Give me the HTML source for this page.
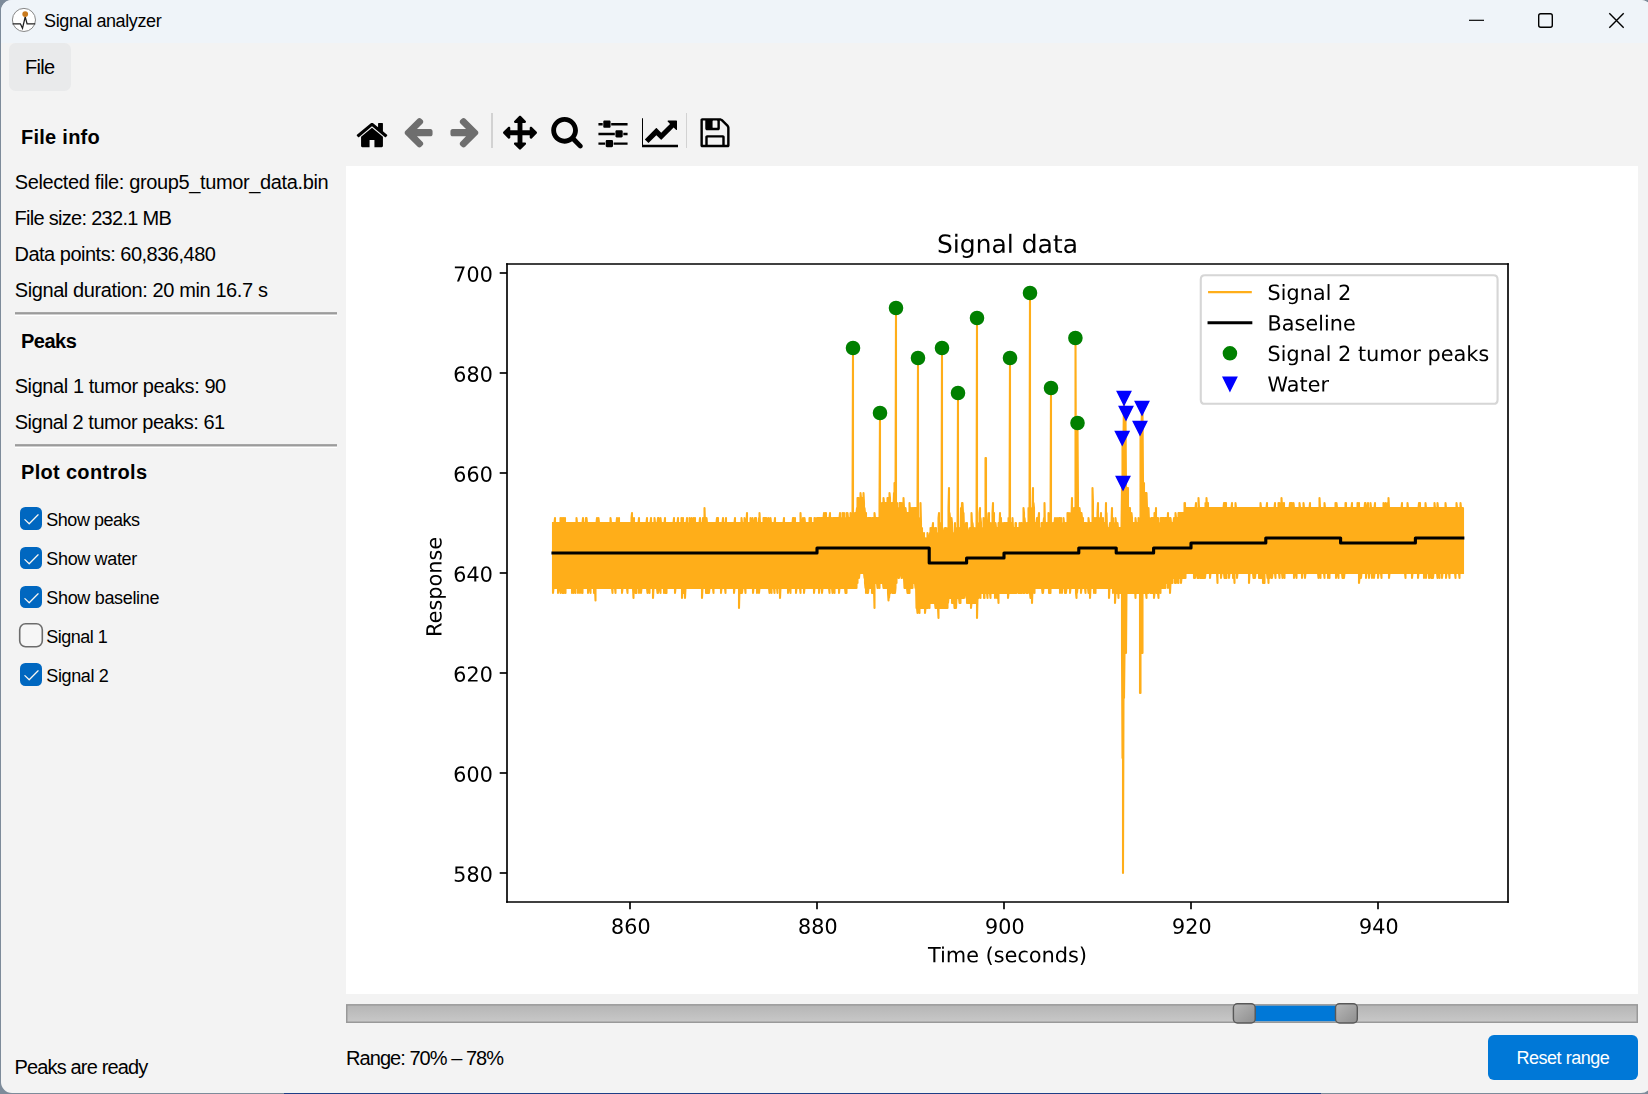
<!DOCTYPE html>
<html><head><meta charset="utf-8"><title>Signal analyzer</title>
<style>
html,body{margin:0;padding:0}
body{width:1648px;height:1094px;overflow:hidden;background:linear-gradient(90deg,#7d8b9a 0,#7d8b9a 284px,#1d3e86 284px,#1d3e86 1321px,#7d8b9a 1321px);position:relative;font-family:"Liberation Sans",sans-serif;color:#000}
#win{position:absolute;left:1px;top:0;width:1650.5px;height:1092.7px;background:#f3f3f3;border-radius:11px;overflow:hidden}
#tb{position:absolute;left:0;top:0;width:100%;height:43px;background:#eff4f9}
.abs,.t,.ic{position:absolute}
.t{white-space:nowrap;line-height:1}
#win>*{margin-left:-1px}
#tb{margin-left:0}
.sep{position:absolute;left:15px;width:322px;height:4px;background:linear-gradient(#a6a6a6 0,#a6a6a6 1px,#9b9b9b 1px,#9b9b9b 2px,#cfcfcf 2px,#cfcfcf 3px,#fff 3px,#fff 4px)}
.cb{position:absolute;left:19.9px;width:22.3px;height:22.6px;border-radius:5.3px;background:#0067c0}
.cb svg{position:absolute;left:0;top:0}
.cbu{position:absolute;left:18.9px;width:24.2px;height:24.4px;box-sizing:border-box;border-radius:6.5px;background:#f6f6f6;border:1.5px solid #747474}
</style></head><body><div id="win">
<div id="tb"></div>

<svg class="abs" style="left:10px;top:6px" width="28" height="28" viewBox="10 6 28 28"><circle cx="23.95" cy="19.95" r="11.55" fill="#fff" stroke="#868686" stroke-width="1"/><path d="M12.6 23.8H20.4L22.5 28.3L25.2 16.8L27.1 23.8H35.2" fill="none" stroke="#222" stroke-width="1.3" stroke-linejoin="miter"/><circle cx="25.2" cy="14.1" r="2.9" fill="#c97a1e"/></svg>
<svg class="abs" style="left:1460px;top:8px" width="180" height="26" viewBox="1460 8 180 26" fill="none" stroke="#000" stroke-width="1.4"><path d="M1469 20.3H1484" stroke-width="1.15"/><rect x="1538.7" y="13.7" width="13.6" height="13.6" rx="2"/><path d="M1609.3 13.3L1623.7 27.7M1623.7 13.3L1609.3 27.7"/></svg>
<div class="abs" style="left:8.8px;top:43px;width:62.5px;height:48px;border-radius:6.5px;background:#e9eaeb"></div>
<div class="abs" style="left:1488px;top:1034.8px;width:150px;height:45.2px;border-radius:6px;background:#0078d7"></div>
<div class="t" style="left:44.10px;top:11.66px;font-size:18px;letter-spacing:-0.393px;">Signal analyzer</div>
<div class="t" style="left:24.90px;top:56.87px;font-size:20px;letter-spacing:-0.667px;">File</div>
<div class="t" style="left:21.00px;top:127.17px;font-size:20px;font-weight:bold;letter-spacing:0.263px;">File info</div>
<div class="t" style="left:14.70px;top:172.07px;font-size:20px;letter-spacing:-0.371px;">Selected file: group5_tumor_data.bin</div>
<div class="t" style="left:14.50px;top:208.07px;font-size:20px;letter-spacing:-0.711px;">File size: 232.1 MB</div>
<div class="t" style="left:14.50px;top:244.07px;font-size:20px;letter-spacing:-0.500px;">Data points: 60,836,480</div>
<div class="t" style="left:14.70px;top:279.87px;font-size:20px;letter-spacing:-0.393px;">Signal duration: 20 min 16.7 s</div>
<div class="t" style="left:21.00px;top:330.67px;font-size:20px;font-weight:bold;letter-spacing:-0.500px;">Peaks</div>
<div class="t" style="left:14.70px;top:375.97px;font-size:20px;letter-spacing:-0.422px;">Signal 1 tumor peaks: 90</div>
<div class="t" style="left:14.70px;top:411.87px;font-size:20px;letter-spacing:-0.465px;">Signal 2 tumor peaks: 61</div>
<div class="t" style="left:21.00px;top:462.37px;font-size:20px;font-weight:bold;letter-spacing:0.317px;">Plot controls</div>
<div class="t" style="left:46.30px;top:510.96px;font-size:18px;letter-spacing:-0.478px;">Show peaks</div>
<div class="t" style="left:46.30px;top:549.86px;font-size:18px;letter-spacing:-0.344px;">Show water</div>
<div class="t" style="left:46.30px;top:588.96px;font-size:18px;letter-spacing:-0.325px;">Show baseline</div>
<div class="t" style="left:46.30px;top:627.96px;font-size:18px;letter-spacing:-0.514px;">Signal 1</div>
<div class="t" style="left:46.30px;top:666.86px;font-size:18px;letter-spacing:-0.386px;">Signal 2</div>
<div class="t" style="left:14.60px;top:1057.07px;font-size:20px;letter-spacing:-0.857px;">Peaks are ready</div>
<div class="t" style="left:346.10px;top:1048.07px;font-size:20px;letter-spacing:-0.960px;">Range: 70% – 78%</div>
<div class="t" style="left:1516.40px;top:1048.76px;font-size:18px;color:#fff;letter-spacing:-0.460px;">Reset range</div>
<div class="sep" style="top:312px"></div><div class="sep" style="top:444px"></div>
<div class="cb" style="top:507.4px"><svg width="22.3" height="22.3" viewBox="0 0 22.3 22.3"><path d="M4.9 12.6L9.2 16.8L18.1 7.8" fill="none" stroke="#fbf8f2" stroke-width="1.25" stroke-linecap="round" stroke-linejoin="round"/></svg></div>
<div class="cb" style="top:546.5px"><svg width="22.3" height="22.3" viewBox="0 0 22.3 22.3"><path d="M4.9 12.6L9.2 16.8L18.1 7.8" fill="none" stroke="#fbf8f2" stroke-width="1.25" stroke-linecap="round" stroke-linejoin="round"/></svg></div>
<div class="cb" style="top:585.5px"><svg width="22.3" height="22.3" viewBox="0 0 22.3 22.3"><path d="M4.9 12.6L9.2 16.8L18.1 7.8" fill="none" stroke="#fbf8f2" stroke-width="1.25" stroke-linecap="round" stroke-linejoin="round"/></svg></div>
<svg class="abs" style="left:17px;top:621px" width="28" height="28" viewBox="0 0 28 28"><rect x="2.7" y="2.8" width="22.6" height="22.9" rx="5.9" fill="#f6f6f6" stroke="#6c6c6c" stroke-width="1.6"/></svg>
<div class="cb" style="top:663.2px"><svg width="22.3" height="22.3" viewBox="0 0 22.3 22.3"><path d="M4.9 12.6L9.2 16.8L18.1 7.8" fill="none" stroke="#fbf8f2" stroke-width="1.25" stroke-linecap="round" stroke-linejoin="round"/></svg></div>
<svg class="ic" style="left:353.8px;top:114.3px" width="36" height="36" viewBox="0 0 72 72"><path d="M 57.86 45.94 C 57.86 45.87 57.86 45.79 57.82 45.72 L 35.99 27.73 L 14.18 45.72 C 14.18 45.79 14.14 45.87 14.14 45.94 L 14.14 64.15 C 14.14 65.48 15.24 66.58 16.57 66.58 L 31.14 66.58 L 31.14 52.02 L 40.86 52.02 L 40.86 66.58 L 55.43 66.58 C 56.76 66.58 57.86 65.48 57.86 64.15 z M 66.32 43.33 C 66.73 42.83 66.66 42.03 66.17 41.62 L 57.86 34.71 L 57.86 19.23 C 57.86 18.55 57.33 18.02 56.64 18.02 L 49.36 18.02 C 48.67 18.02 48.14 18.55 48.14 19.23 L 48.14 26.62 L 38.88 18.89 C 37.29 17.56 34.71 17.56 33.12 18.89 L 5.83 41.62 C 5.34 42.03 5.27 42.83 5.68 43.33 L 8.03 46.13 C 8.22 46.35 8.53 46.51 8.83 46.55 C 9.17 46.59 9.47 46.47 9.74 46.28 L 35.99 24.39 L 62.26 46.28 C 62.48 46.47 62.75 46.55 63.06 46.55 C 63.09 46.55 63.13 46.55 63.17 46.55 C 63.47 46.51 63.78 46.35 63.97 46.13 z" fill="#000"/></svg>
<svg class="ic" style="left:399.6px;top:114.3px" width="36" height="36" viewBox="0 0 72 72"><path d="M 65.14 35.01 C 65.14 32.42 63.43 30.15 60.7 30.15 L 33.99 30.15 L 45.11 19.04 C 46.02 18.12 46.55 16.87 46.55 15.58 C 46.55 14.29 46.02 13.03 45.11 12.13 L 42.26 9.32 C 41.34 8.41 40.13 7.88 38.85 7.88 C 37.55 7.88 36.3 8.41 35.39 9.32 L 10.69 33.99 C 9.82 34.9 9.29 36.14 9.29 37.44 C 9.29 38.73 9.82 39.98 10.69 40.85 L 35.39 65.6 C 36.3 66.47 37.55 67 38.85 67 C 40.13 67 41.39 66.47 42.26 65.6 L 45.11 62.71 C 46.02 61.84 46.55 60.58 46.55 59.3 C 46.55 58.01 46.02 56.76 45.11 55.88 L 33.99 44.73 L 60.7 44.73 C 63.43 44.73 65.14 42.44 65.14 39.86 z" fill="#6e6e6e"/></svg>
<svg class="ic" style="left:446.7px;top:114.3px" width="36" height="36" viewBox="0 0 72 72"><path d="M 62.71 37.44 C 62.71 36.14 62.22 34.9 61.31 34.02 L 36.61 9.32 C 35.69 8.41 34.44 7.88 33.15 7.88 C 31.87 7.88 30.64 8.41 29.74 9.32 L 26.89 12.16 C 25.98 13.03 25.45 14.29 25.45 15.58 C 25.45 16.87 25.98 18.12 26.89 19 L 38.01 30.15 L 11.3 30.15 C 8.57 30.15 6.86 32.42 6.86 35.01 L 6.86 39.86 C 6.86 42.44 8.57 44.73 11.3 44.73 L 38.01 44.73 L 26.89 55.84 C 25.98 56.76 25.45 58.01 25.45 59.3 C 25.45 60.58 25.98 61.84 26.89 62.75 L 29.74 65.6 C 30.64 66.47 31.87 67 33.15 67 C 34.44 67 35.69 66.47 36.61 65.6 L 61.31 40.89 C 62.22 39.98 62.71 38.73 62.71 37.44" fill="#6e6e6e"/></svg>
<div class="abs" style="left:491.3px;top:113px;width:1.4px;height:35px;background:#d2d2d2"></div>
<svg class="ic" style="left:502.1px;top:114.3px" width="36" height="36" viewBox="0 0 72 72"><path d="M 70 37.44 C 70 36.8 69.73 36.19 69.28 35.74 L 59.57 26.02 C 59.11 25.56 58.5 25.3 57.86 25.3 C 56.53 25.3 55.43 26.4 55.43 27.73 L 55.43 32.58 L 40.86 32.58 L 40.86 18.02 L 45.71 18.02 C 47.04 18.02 48.14 16.91 48.14 15.58 C 48.14 14.94 47.88 14.33 47.42 13.87 L 37.71 4.16 C 37.25 3.71 36.65 3.44 36 3.44 C 35.35 3.44 34.75 3.71 34.29 4.16 L 24.58 13.87 C 24.12 14.33 23.86 14.94 23.86 15.58 C 23.86 16.91 24.96 18.02 26.29 18.02 L 31.14 18.02 L 31.14 32.58 L 16.57 32.58 L 16.57 27.73 C 16.57 26.4 15.47 25.3 14.14 25.3 C 13.5 25.3 12.89 25.56 12.43 26.02 L 2.72 35.74 C 2.27 36.19 2 36.8 2 37.44 C 2 38.09 2.27 38.69 2.72 39.15 L 12.43 48.86 C 12.89 49.32 13.5 49.58 14.14 49.58 C 15.47 49.58 16.57 48.49 16.57 47.16 L 16.57 42.3 L 31.14 42.3 L 31.14 56.87 L 26.29 56.87 C 24.96 56.87 23.86 57.97 23.86 59.3 C 23.86 59.94 24.12 60.55 24.58 61.01 L 34.29 70.72 C 34.75 71.17 35.35 71.44 36 71.44 C 36.65 71.44 37.25 71.17 37.71 70.72 L 47.42 61.01 C 47.88 60.55 48.14 59.94 48.14 59.3 C 48.14 57.97 47.04 56.87 45.71 56.87 L 40.86 56.87 L 40.86 42.3 L 55.43 42.3 L 55.43 47.16 C 55.43 48.49 56.53 49.58 57.86 49.58 C 58.5 49.58 59.11 49.32 59.57 48.86 L 69.28 39.15 C 69.73 38.69 70 38.09 70 37.44" fill="#000"/></svg>
<svg class="ic" style="left:549.3px;top:114.3px" width="36" height="36" viewBox="0 0 72 72"><path d="M 48.14 32.59 C 48.14 41.96 40.51 49.59 31.14 49.59 C 21.77 49.59 14.14 41.96 14.14 32.59 C 14.14 23.22 21.77 15.59 31.14 15.59 C 40.51 15.59 48.14 23.22 48.14 32.59 M 67.57 64.16 C 67.57 62.87 67.04 61.62 66.17 60.75 L 53.15 47.73 C 56.22 43.29 57.86 37.98 57.86 32.59 C 57.86 17.82 45.91 5.87 31.14 5.87 C 16.38 5.87 4.43 17.82 4.43 32.59 C 4.43 47.35 16.38 59.3 31.14 59.3 C 36.53 59.3 41.84 57.66 46.28 54.59 L 59.3 67.58 C 60.17 68.48 61.42 69.01 62.72 69.01 C 65.37 69.01 67.57 66.81 67.57 64.16" fill="#000"/></svg>
<svg class="ic" style="left:594.5px;top:114.3px" width="36" height="36" viewBox="0 0 72 72"><path d="M 20.21 56.87 L 6.86 56.87 L 6.86 61.73 L 20.21 61.73 z M 33.57 52.02 L 23.86 52.02 C 22.53 52.02 21.42 53.11 21.42 54.44 L 21.42 64.16 C 21.42 65.49 22.53 66.58 23.86 66.58 L 33.57 66.58 C 34.9 66.58 36 65.49 36 64.16 L 36 54.44 C 36 53.11 34.9 52.02 33.57 52.02 M 39.64 37.44 L 6.86 37.44 L 6.86 42.3 L 39.64 42.3 z M 15.36 18.02 L 6.86 18.02 L 6.86 22.87 L 15.36 22.87 z M 65.14 56.87 L 37.21 56.87 L 37.21 61.73 L 65.14 61.73 z M 28.71 13.16 L 19 13.16 C 17.67 13.16 16.57 14.26 16.57 15.58 L 16.57 25.3 C 16.57 26.62 17.67 27.73 19 27.73 L 28.71 27.73 C 30.04 27.73 31.14 26.62 31.14 25.3 L 31.14 15.58 C 31.14 14.26 30.04 13.16 28.71 13.16 M 53 32.58 L 43.29 32.58 C 41.96 32.58 40.86 33.69 40.86 35.02 L 40.86 44.73 C 40.86 46.06 41.96 47.16 43.29 47.16 L 53 47.16 C 54.33 47.16 55.42 46.06 55.42 44.73 L 55.42 35.02 C 55.42 33.69 54.33 32.58 53 32.58 M 65.14 37.44 L 56.64 37.44 L 56.64 42.3 L 65.14 42.3 z M 65.14 18.02 L 32.36 18.02 L 32.36 22.87 L 65.14 22.87 z" fill="#000"/></svg>
<svg class="ic" style="left:642.3px;top:114.3px" width="36" height="36" viewBox="0 0 72 72"><path d="M 74.86 61.73 L 2 61.73 L 2 8.3 L -2.86 8.3 L -2.86 66.58 L 74.86 66.58 z M 70 14.37 C 70 13.69 69.47 13.16 68.79 13.16 L 52.28 13.16 C 51.22 13.16 50.65 14.45 51.45 15.24 L 56.04 19.83 L 38.43 37.44 L 29.59 28.6 C 29.09 28.11 28.34 28.11 27.84 28.6 L 5.64 50.8 L 12.93 58.08 L 28.71 42.3 L 37.56 51.15 C 38.05 51.63 38.8 51.63 39.3 51.15 L 63.33 27.12 L 67.92 31.71 C 68.71 32.51 70 31.94 70 30.87 z" fill="#000"/></svg>
<div class="abs" style="left:685.5px;top:113px;width:1.4px;height:35px;background:#d2d2d2"></div>
<svg class="ic" style="left:697px;top:114.3px" width="36" height="36" viewBox="0 0 72 72"><path d="M 21.42 61.73 L 21.42 47.16 L 50.57 47.16 L 50.57 61.73 z M 55.42 61.73 L 55.42 45.94 C 55.42 43.93 53.8 42.3 51.79 42.3 L 20.21 42.3 C 18.2 42.3 16.57 43.93 16.57 45.94 L 16.57 61.73 L 11.71 61.73 L 11.71 13.16 L 16.57 13.16 L 16.57 28.94 C 16.57 30.96 18.2 32.58 20.21 32.58 L 42.07 32.58 C 44.09 32.58 45.71 30.96 45.71 28.94 L 45.71 13.16 C 46.48 13.16 47.95 13.77 48.48 14.3 L 59.14 24.96 C 59.64 25.45 60.29 27.01 60.29 27.73 L 60.29 61.73 z M 40.86 26.52 C 40.86 27.16 40.28 27.73 39.64 27.73 L 32.36 27.73 C 31.71 27.73 31.14 27.16 31.14 26.52 L 31.14 14.37 C 31.14 13.72 31.71 13.16 32.36 13.16 L 39.64 13.16 C 40.28 13.16 40.86 13.72 40.86 14.37 z M 65.14 27.73 C 65.14 25.72 64.01 22.95 62.56 21.5 L 51.94 10.88 C 50.49 9.44 47.72 8.3 45.71 8.3 L 10.5 8.3 C 8.49 8.3 6.86 9.93 6.86 11.94 L 6.86 62.94 C 6.86 64.96 8.49 66.58 10.5 66.58 L 61.5 66.58 C 63.51 66.58 65.14 64.96 65.14 62.94 z" fill="#000"/></svg>
<div class="abs" style="left:346px;top:166px;width:1292px;height:828px;background:#fff"><svg id="plot" width="1292" height="828" viewBox="0 0 620.16 397.44">
<defs>
<style>#plot *{stroke-linejoin:round;stroke-linecap:butt}</style>
</defs>
<g id="figure_1">
<g id="patch_1">
<path d="M 0 397.44 L 620.16 397.44 L 620.16 0 L 0 0 z" style="fill: #ffffff"/>
</g>
<g id="axes_1">
<g id="patch_2">
<path d="M 77.28 353.28 L 557.76 353.28 L 557.76 47.04 L 77.28 47.04 z" style="fill: #ffffff"/>
</g>
<g id="matplotlib.axis_1">
<g id="xtick_1">
<g id="line2d_1">
<defs>
<path id="m1504cfccaf" d="M 0 0 L 0 3.5" style="stroke: #000000; stroke-width: 0.8"/>
</defs>
<g>
<use href="#m1504cfccaf" x="136.32" y="353.28" style="stroke: #000000; stroke-width: 0.8"/>
</g>
</g>
<g id="text_1" transform="translate(0.384 0.624)">
<g transform="translate(126.77625 367.878437) scale(0.1 -0.1)">
<defs>
<path id="DejaVuSans-38" d="M 2034 2216 Q 1584 2216 1326 1975 Q 1069 1734 1069 1313 Q 1069 891 1326 650 Q 1584 409 2034 409 Q 2484 409 2743 651 Q 3003 894 3003 1313 Q 3003 1734 2745 1975 Q 2488 2216 2034 2216 z M 1403 2484 Q 997 2584 770 2862 Q 544 3141 544 3541 Q 544 4100 942 4425 Q 1341 4750 2034 4750 Q 2731 4750 3128 4425 Q 3525 4100 3525 3541 Q 3525 3141 3298 2862 Q 3072 2584 2669 2484 Q 3125 2378 3379 2068 Q 3634 1759 3634 1313 Q 3634 634 3220 271 Q 2806 -91 2034 -91 Q 1263 -91 848 271 Q 434 634 434 1313 Q 434 1759 690 2068 Q 947 2378 1403 2484 z M 1172 3481 Q 1172 3119 1398 2916 Q 1625 2713 2034 2713 Q 2441 2713 2670 2916 Q 2900 3119 2900 3481 Q 2900 3844 2670 4047 Q 2441 4250 2034 4250 Q 1625 4250 1398 4047 Q 1172 3844 1172 3481 z" transform="scale(0.015625)"/>
<path id="DejaVuSans-36" d="M 2113 2584 Q 1688 2584 1439 2293 Q 1191 2003 1191 1497 Q 1191 994 1439 701 Q 1688 409 2113 409 Q 2538 409 2786 701 Q 3034 994 3034 1497 Q 3034 2003 2786 2293 Q 2538 2584 2113 2584 z M 3366 4563 L 3366 3988 Q 3128 4100 2886 4159 Q 2644 4219 2406 4219 Q 1781 4219 1451 3797 Q 1122 3375 1075 2522 Q 1259 2794 1537 2939 Q 1816 3084 2150 3084 Q 2853 3084 3261 2657 Q 3669 2231 3669 1497 Q 3669 778 3244 343 Q 2819 -91 2113 -91 Q 1303 -91 875 529 Q 447 1150 447 2328 Q 447 3434 972 4092 Q 1497 4750 2381 4750 Q 2619 4750 2861 4703 Q 3103 4656 3366 4563 z" transform="scale(0.015625)"/>
<path id="DejaVuSans-30" d="M 2034 4250 Q 1547 4250 1301 3770 Q 1056 3291 1056 2328 Q 1056 1369 1301 889 Q 1547 409 2034 409 Q 2525 409 2770 889 Q 3016 1369 3016 2328 Q 3016 3291 2770 3770 Q 2525 4250 2034 4250 z M 2034 4750 Q 2819 4750 3233 4129 Q 3647 3509 3647 2328 Q 3647 1150 3233 529 Q 2819 -91 2034 -91 Q 1250 -91 836 529 Q 422 1150 422 2328 Q 422 3509 836 4129 Q 1250 4750 2034 4750 z" transform="scale(0.015625)"/>
</defs>
<use href="#DejaVuSans-38"/>
<use href="#DejaVuSans-36" transform="translate(63.623047 0)"/>
<use href="#DejaVuSans-30" transform="translate(127.246094 0)"/>
</g>
</g>
</g>
<g id="xtick_2">
<g id="line2d_2">
<g>
<use href="#m1504cfccaf" x="226.08" y="353.28" style="stroke: #000000; stroke-width: 0.8"/>
</g>
</g>
<g id="text_2" transform="translate(0.384 0.624)">
<g transform="translate(216.53625 367.878437) scale(0.1 -0.1)">
<use href="#DejaVuSans-38"/>
<use href="#DejaVuSans-38" transform="translate(63.623047 0)"/>
<use href="#DejaVuSans-30" transform="translate(127.246094 0)"/>
</g>
</g>
</g>
<g id="xtick_3">
<g id="line2d_3">
<g>
<use href="#m1504cfccaf" x="315.84" y="353.28" style="stroke: #000000; stroke-width: 0.8"/>
</g>
</g>
<g id="text_3" transform="translate(0.384 0.624)">
<g transform="translate(306.29625 367.878437) scale(0.1 -0.1)">
<defs>
<path id="DejaVuSans-39" d="M 703 97 L 703 672 Q 941 559 1184 500 Q 1428 441 1663 441 Q 2288 441 2617 861 Q 2947 1281 2994 2138 Q 2813 1869 2534 1725 Q 2256 1581 1919 1581 Q 1219 1581 811 2004 Q 403 2428 403 3163 Q 403 3881 828 4315 Q 1253 4750 1959 4750 Q 2769 4750 3195 4129 Q 3622 3509 3622 2328 Q 3622 1225 3098 567 Q 2575 -91 1691 -91 Q 1453 -91 1209 -44 Q 966 3 703 97 z M 1959 2075 Q 2384 2075 2632 2365 Q 2881 2656 2881 3163 Q 2881 3666 2632 3958 Q 2384 4250 1959 4250 Q 1534 4250 1286 3958 Q 1038 3666 1038 3163 Q 1038 2656 1286 2365 Q 1534 2075 1959 2075 z" transform="scale(0.015625)"/>
</defs>
<use href="#DejaVuSans-39"/>
<use href="#DejaVuSans-30" transform="translate(63.623047 0)"/>
<use href="#DejaVuSans-30" transform="translate(127.246094 0)"/>
</g>
</g>
</g>
<g id="xtick_4">
<g id="line2d_4">
<g>
<use href="#m1504cfccaf" x="405.6" y="353.28" style="stroke: #000000; stroke-width: 0.8"/>
</g>
</g>
<g id="text_4" transform="translate(0.384 0.624)">
<g transform="translate(396.05625 367.878437) scale(0.1 -0.1)">
<defs>
<path id="DejaVuSans-32" d="M 1228 531 L 3431 531 L 3431 0 L 469 0 L 469 531 Q 828 903 1448 1529 Q 2069 2156 2228 2338 Q 2531 2678 2651 2914 Q 2772 3150 2772 3378 Q 2772 3750 2511 3984 Q 2250 4219 1831 4219 Q 1534 4219 1204 4116 Q 875 4013 500 3803 L 500 4441 Q 881 4594 1212 4672 Q 1544 4750 1819 4750 Q 2544 4750 2975 4387 Q 3406 4025 3406 3419 Q 3406 3131 3298 2873 Q 3191 2616 2906 2266 Q 2828 2175 2409 1742 Q 1991 1309 1228 531 z" transform="scale(0.015625)"/>
</defs>
<use href="#DejaVuSans-39"/>
<use href="#DejaVuSans-32" transform="translate(63.623047 0)"/>
<use href="#DejaVuSans-30" transform="translate(127.246094 0)"/>
</g>
</g>
</g>
<g id="xtick_5">
<g id="line2d_5">
<g>
<use href="#m1504cfccaf" x="495.36" y="353.28" style="stroke: #000000; stroke-width: 0.8"/>
</g>
</g>
<g id="text_5" transform="translate(0.384 0.624)">
<g transform="translate(485.81625 367.878437) scale(0.1 -0.1)">
<defs>
<path id="DejaVuSans-34" d="M 2419 4116 L 825 1625 L 2419 1625 L 2419 4116 z M 2253 4666 L 3047 4666 L 3047 1625 L 3713 1625 L 3713 1100 L 3047 1100 L 3047 0 L 2419 0 L 2419 1100 L 313 1100 L 313 1709 L 2253 4666 z" transform="scale(0.015625)"/>
</defs>
<use href="#DejaVuSans-39"/>
<use href="#DejaVuSans-34" transform="translate(63.623047 0)"/>
<use href="#DejaVuSans-30" transform="translate(127.246094 0)"/>
</g>
</g>
</g>
<g id="text_6" transform="translate(0.000 0.624)">
<g transform="translate(279.358281 381.556562) scale(0.1 -0.1)">
<defs>
<path id="DejaVuSans-54" d="M -19 4666 L 3928 4666 L 3928 4134 L 2272 4134 L 2272 0 L 1638 0 L 1638 4134 L -19 4134 L -19 4666 z" transform="scale(0.015625)"/>
<path id="DejaVuSans-69" d="M 603 3500 L 1178 3500 L 1178 0 L 603 0 L 603 3500 z M 603 4863 L 1178 4863 L 1178 4134 L 603 4134 L 603 4863 z" transform="scale(0.015625)"/>
<path id="DejaVuSans-6d" d="M 3328 2828 Q 3544 3216 3844 3400 Q 4144 3584 4550 3584 Q 5097 3584 5394 3201 Q 5691 2819 5691 2113 L 5691 0 L 5113 0 L 5113 2094 Q 5113 2597 4934 2840 Q 4756 3084 4391 3084 Q 3944 3084 3684 2787 Q 3425 2491 3425 1978 L 3425 0 L 2847 0 L 2847 2094 Q 2847 2600 2669 2842 Q 2491 3084 2119 3084 Q 1678 3084 1418 2786 Q 1159 2488 1159 1978 L 1159 0 L 581 0 L 581 3500 L 1159 3500 L 1159 2956 Q 1356 3278 1631 3431 Q 1906 3584 2284 3584 Q 2666 3584 2933 3390 Q 3200 3197 3328 2828 z" transform="scale(0.015625)"/>
<path id="DejaVuSans-65" d="M 3597 1894 L 3597 1613 L 953 1613 Q 991 1019 1311 708 Q 1631 397 2203 397 Q 2534 397 2845 478 Q 3156 559 3463 722 L 3463 178 Q 3153 47 2828 -22 Q 2503 -91 2169 -91 Q 1331 -91 842 396 Q 353 884 353 1716 Q 353 2575 817 3079 Q 1281 3584 2069 3584 Q 2775 3584 3186 3129 Q 3597 2675 3597 1894 z M 3022 2063 Q 3016 2534 2758 2815 Q 2500 3097 2075 3097 Q 1594 3097 1305 2825 Q 1016 2553 972 2059 L 3022 2063 z" transform="scale(0.015625)"/>
<path id="DejaVuSans-20" transform="scale(0.015625)"/>
<path id="DejaVuSans-28" d="M 1984 4856 Q 1566 4138 1362 3434 Q 1159 2731 1159 2009 Q 1159 1288 1364 580 Q 1569 -128 1984 -844 L 1484 -844 Q 1016 -109 783 600 Q 550 1309 550 2009 Q 550 2706 781 3412 Q 1013 4119 1484 4856 L 1984 4856 z" transform="scale(0.015625)"/>
<path id="DejaVuSans-73" d="M 2834 3397 L 2834 2853 Q 2591 2978 2328 3040 Q 2066 3103 1784 3103 Q 1356 3103 1142 2972 Q 928 2841 928 2578 Q 928 2378 1081 2264 Q 1234 2150 1697 2047 L 1894 2003 Q 2506 1872 2764 1633 Q 3022 1394 3022 966 Q 3022 478 2636 193 Q 2250 -91 1575 -91 Q 1294 -91 989 -36 Q 684 19 347 128 L 347 722 Q 666 556 975 473 Q 1284 391 1588 391 Q 1994 391 2212 530 Q 2431 669 2431 922 Q 2431 1156 2273 1281 Q 2116 1406 1581 1522 L 1381 1569 Q 847 1681 609 1914 Q 372 2147 372 2553 Q 372 3047 722 3315 Q 1072 3584 1716 3584 Q 2034 3584 2315 3537 Q 2597 3491 2834 3397 z" transform="scale(0.015625)"/>
<path id="DejaVuSans-63" d="M 3122 3366 L 3122 2828 Q 2878 2963 2633 3030 Q 2388 3097 2138 3097 Q 1578 3097 1268 2742 Q 959 2388 959 1747 Q 959 1106 1268 751 Q 1578 397 2138 397 Q 2388 397 2633 464 Q 2878 531 3122 666 L 3122 134 Q 2881 22 2623 -34 Q 2366 -91 2075 -91 Q 1284 -91 818 406 Q 353 903 353 1747 Q 353 2603 823 3093 Q 1294 3584 2113 3584 Q 2378 3584 2631 3529 Q 2884 3475 3122 3366 z" transform="scale(0.015625)"/>
<path id="DejaVuSans-6f" d="M 1959 3097 Q 1497 3097 1228 2736 Q 959 2375 959 1747 Q 959 1119 1226 758 Q 1494 397 1959 397 Q 2419 397 2687 759 Q 2956 1122 2956 1747 Q 2956 2369 2687 2733 Q 2419 3097 1959 3097 z M 1959 3584 Q 2709 3584 3137 3096 Q 3566 2609 3566 1747 Q 3566 888 3137 398 Q 2709 -91 1959 -91 Q 1206 -91 779 398 Q 353 888 353 1747 Q 353 2609 779 3096 Q 1206 3584 1959 3584 z" transform="scale(0.015625)"/>
<path id="DejaVuSans-6e" d="M 3513 2113 L 3513 0 L 2938 0 L 2938 2094 Q 2938 2591 2744 2837 Q 2550 3084 2163 3084 Q 1697 3084 1428 2787 Q 1159 2491 1159 1978 L 1159 0 L 581 0 L 581 3500 L 1159 3500 L 1159 2956 Q 1366 3272 1645 3428 Q 1925 3584 2291 3584 Q 2894 3584 3203 3211 Q 3513 2838 3513 2113 z" transform="scale(0.015625)"/>
<path id="DejaVuSans-64" d="M 2906 2969 L 2906 4863 L 3481 4863 L 3481 0 L 2906 0 L 2906 525 Q 2725 213 2448 61 Q 2172 -91 1784 -91 Q 1150 -91 751 415 Q 353 922 353 1747 Q 353 2572 751 3078 Q 1150 3584 1784 3584 Q 2172 3584 2448 3432 Q 2725 3281 2906 2969 z M 947 1747 Q 947 1113 1208 752 Q 1469 391 1925 391 Q 2381 391 2643 752 Q 2906 1113 2906 1747 Q 2906 2381 2643 2742 Q 2381 3103 1925 3103 Q 1469 3103 1208 2742 Q 947 2381 947 1747 z" transform="scale(0.015625)"/>
<path id="DejaVuSans-29" d="M 513 4856 L 1013 4856 Q 1481 4119 1714 3412 Q 1947 2706 1947 2009 Q 1947 1309 1714 600 Q 1481 -109 1013 -844 L 513 -844 Q 928 -128 1133 580 Q 1338 1288 1338 2009 Q 1338 2731 1133 3434 Q 928 4138 513 4856 z" transform="scale(0.015625)"/>
</defs>
<use href="#DejaVuSans-54"/>
<use href="#DejaVuSans-69" transform="translate(57.958984 0)"/>
<use href="#DejaVuSans-6d" transform="translate(85.742188 0)"/>
<use href="#DejaVuSans-65" transform="translate(183.154297 0)"/>
<use href="#DejaVuSans-20" transform="translate(244.677734 0)"/>
<use href="#DejaVuSans-28" transform="translate(276.464844 0)"/>
<use href="#DejaVuSans-73" transform="translate(315.478516 0)"/>
<use href="#DejaVuSans-65" transform="translate(367.578125 0)"/>
<use href="#DejaVuSans-63" transform="translate(429.101562 0)"/>
<use href="#DejaVuSans-6f" transform="translate(484.082031 0)"/>
<use href="#DejaVuSans-6e" transform="translate(545.263672 0)"/>
<use href="#DejaVuSans-64" transform="translate(608.642578 0)"/>
<use href="#DejaVuSans-73" transform="translate(672.119141 0)"/>
<use href="#DejaVuSans-29" transform="translate(724.21875 0)"/>
</g>
</g>
</g>
<g id="matplotlib.axis_2">
<g id="ytick_1">
<g id="line2d_6">
<defs>
<path id="m5d545ce8f8" d="M 0 0 L -3.5 0" style="stroke: #000000; stroke-width: 0.8"/>
</defs>
<g>
<use href="#m5d545ce8f8" x="77.28" y="339.36" style="stroke: #000000; stroke-width: 0.8"/>
</g>
</g>
<g id="text_7" transform="translate(0.240 0.336)">
<g transform="translate(51.1925 343.159219) scale(0.1 -0.1)">
<defs>
<path id="DejaVuSans-35" d="M 691 4666 L 3169 4666 L 3169 4134 L 1269 4134 L 1269 2991 Q 1406 3038 1543 3061 Q 1681 3084 1819 3084 Q 2600 3084 3056 2656 Q 3513 2228 3513 1497 Q 3513 744 3044 326 Q 2575 -91 1722 -91 Q 1428 -91 1123 -41 Q 819 9 494 109 L 494 744 Q 775 591 1075 516 Q 1375 441 1709 441 Q 2250 441 2565 725 Q 2881 1009 2881 1497 Q 2881 1984 2565 2268 Q 2250 2553 1709 2553 Q 1456 2553 1204 2497 Q 953 2441 691 2322 L 691 4666 z" transform="scale(0.015625)"/>
</defs>
<use href="#DejaVuSans-35"/>
<use href="#DejaVuSans-38" transform="translate(63.623047 0)"/>
<use href="#DejaVuSans-30" transform="translate(127.246094 0)"/>
</g>
</g>
</g>
<g id="ytick_2">
<g id="line2d_7">
<g>
<use href="#m5d545ce8f8" x="77.28" y="291.36" style="stroke: #000000; stroke-width: 0.8"/>
</g>
</g>
<g id="text_8" transform="translate(0.240 0.336)">
<g transform="translate(51.1925 295.159219) scale(0.1 -0.1)">
<use href="#DejaVuSans-36"/>
<use href="#DejaVuSans-30" transform="translate(63.623047 0)"/>
<use href="#DejaVuSans-30" transform="translate(127.246094 0)"/>
</g>
</g>
</g>
<g id="ytick_3">
<g id="line2d_8">
<g>
<use href="#m5d545ce8f8" x="77.28" y="243.36" style="stroke: #000000; stroke-width: 0.8"/>
</g>
</g>
<g id="text_9" transform="translate(0.240 0.336)">
<g transform="translate(51.1925 247.159219) scale(0.1 -0.1)">
<use href="#DejaVuSans-36"/>
<use href="#DejaVuSans-32" transform="translate(63.623047 0)"/>
<use href="#DejaVuSans-30" transform="translate(127.246094 0)"/>
</g>
</g>
</g>
<g id="ytick_4">
<g id="line2d_9">
<g>
<use href="#m5d545ce8f8" x="77.28" y="195.36" style="stroke: #000000; stroke-width: 0.8"/>
</g>
</g>
<g id="text_10" transform="translate(0.240 0.336)">
<g transform="translate(51.1925 199.159219) scale(0.1 -0.1)">
<use href="#DejaVuSans-36"/>
<use href="#DejaVuSans-34" transform="translate(63.623047 0)"/>
<use href="#DejaVuSans-30" transform="translate(127.246094 0)"/>
</g>
</g>
</g>
<g id="ytick_5">
<g id="line2d_10">
<g>
<use href="#m5d545ce8f8" x="77.28" y="147.36" style="stroke: #000000; stroke-width: 0.8"/>
</g>
</g>
<g id="text_11" transform="translate(0.240 0.336)">
<g transform="translate(51.1925 151.159219) scale(0.1 -0.1)">
<use href="#DejaVuSans-36"/>
<use href="#DejaVuSans-36" transform="translate(63.623047 0)"/>
<use href="#DejaVuSans-30" transform="translate(127.246094 0)"/>
</g>
</g>
</g>
<g id="ytick_6">
<g id="line2d_11">
<g>
<use href="#m5d545ce8f8" x="77.28" y="99.36" style="stroke: #000000; stroke-width: 0.8"/>
</g>
</g>
<g id="text_12" transform="translate(0.240 0.336)">
<g transform="translate(51.1925 103.159219) scale(0.1 -0.1)">
<use href="#DejaVuSans-36"/>
<use href="#DejaVuSans-38" transform="translate(63.623047 0)"/>
<use href="#DejaVuSans-30" transform="translate(127.246094 0)"/>
</g>
</g>
</g>
<g id="ytick_7">
<g id="line2d_12">
<g>
<use href="#m5d545ce8f8" x="77.28" y="51.36" style="stroke: #000000; stroke-width: 0.8"/>
</g>
</g>
<g id="text_13" transform="translate(0.240 0.336)">
<g transform="translate(51.1925 55.159219) scale(0.1 -0.1)">
<defs>
<path id="DejaVuSans-37" d="M 525 4666 L 3525 4666 L 3525 4397 L 1831 0 L 1172 0 L 2766 4134 L 525 4134 L 525 4666 z" transform="scale(0.015625)"/>
</defs>
<use href="#DejaVuSans-37"/>
<use href="#DejaVuSans-30" transform="translate(63.623047 0)"/>
<use href="#DejaVuSans-30" transform="translate(127.246094 0)"/>
</g>
</g>
</g>
<g id="text_14" transform="translate(0.720 1.872)">
<g transform="translate(45.112812 224.174062) rotate(-90) scale(0.1 -0.1)">
<defs>
<path id="DejaVuSans-52" d="M 2841 2188 Q 3044 2119 3236 1894 Q 3428 1669 3622 1275 L 4263 0 L 3584 0 L 2988 1197 Q 2756 1666 2539 1819 Q 2322 1972 1947 1972 L 1259 1972 L 1259 0 L 628 0 L 628 4666 L 2053 4666 Q 2853 4666 3247 4331 Q 3641 3997 3641 3322 Q 3641 2881 3436 2590 Q 3231 2300 2841 2188 z M 1259 4147 L 1259 2491 L 2053 2491 Q 2509 2491 2742 2702 Q 2975 2913 2975 3322 Q 2975 3731 2742 3939 Q 2509 4147 2053 4147 L 1259 4147 z" transform="scale(0.015625)"/>
<path id="DejaVuSans-70" d="M 1159 525 L 1159 -1331 L 581 -1331 L 581 3500 L 1159 3500 L 1159 2969 Q 1341 3281 1617 3432 Q 1894 3584 2278 3584 Q 2916 3584 3314 3078 Q 3713 2572 3713 1747 Q 3713 922 3314 415 Q 2916 -91 2278 -91 Q 1894 -91 1617 61 Q 1341 213 1159 525 z M 3116 1747 Q 3116 2381 2855 2742 Q 2594 3103 2138 3103 Q 1681 3103 1420 2742 Q 1159 2381 1159 1747 Q 1159 1113 1420 752 Q 1681 391 2138 391 Q 2594 391 2855 752 Q 3116 1113 3116 1747 z" transform="scale(0.015625)"/>
</defs>
<use href="#DejaVuSans-52"/>
<use href="#DejaVuSans-65" transform="translate(64.982422 0)"/>
<use href="#DejaVuSans-73" transform="translate(126.505859 0)"/>
<use href="#DejaVuSans-70" transform="translate(178.605469 0)"/>
<use href="#DejaVuSans-6f" transform="translate(242.082031 0)"/>
<use href="#DejaVuSans-6e" transform="translate(303.263672 0)"/>
<use href="#DejaVuSans-73" transform="translate(366.642578 0)"/>
<use href="#DejaVuSans-65" transform="translate(418.742188 0)"/>
</g>
</g>
</g>
<g id="line2d_13">
<path d="M 99.36 171.36 L 99.36 204.96 L 99.6 202.56 L 99.6 171.36 L 99.84 171.36 L 99.84 202.56 L 100.08 202.56 L 100.08 171.36 L 100.32 168.96 L 100.32 202.56 L 100.56 202.56 L 100.56 171.36 L 100.8 171.36 L 100.8 202.56 L 101.04 202.56 L 101.04 171.36 L 101.28 171.36 L 101.28 202.56 L 101.52 202.56 L 101.52 171.36 L 101.76 171.36 L 101.76 204.96 L 102 202.56 L 102 171.36 L 102.24 171.36 L 102.24 202.56 L 102.48 202.56 L 102.48 171.36 L 102.72 171.36 L 102.72 202.56 L 102.96 204.96 L 102.96 168.96 L 103.2 171.36 L 103.2 202.56 L 103.44 202.56 L 103.44 171.36 L 103.68 168.96 L 103.68 202.56 L 103.92 204.96 L 103.92 171.36 L 104.16 171.36 L 104.16 202.56 L 104.4 202.56 L 104.4 168.96 L 104.64 171.36 L 104.64 204.96 L 104.88 202.56 L 104.88 171.36 L 105.12 168.96 L 105.12 202.56 L 105.36 204.96 L 105.36 171.36 L 105.6 171.36 L 105.6 202.56 L 105.84 202.56 L 105.84 171.36 L 106.08 171.36 L 106.08 202.56 L 106.32 202.56 L 106.32 171.36 L 106.56 171.36 L 106.56 202.56 L 106.8 202.56 L 106.8 171.36 L 107.04 171.36 L 107.04 202.56 L 107.28 202.56 L 107.28 171.36 L 107.52 171.36 L 107.52 202.56 L 107.76 202.56 L 107.76 171.36 L 108 171.36 L 108 202.56 L 108.24 202.56 L 108.24 171.36 L 108.48 171.36 L 108.48 204.96 L 108.72 202.56 L 108.72 171.36 L 108.96 171.36 L 108.96 202.56 L 109.2 204.96 L 109.2 171.36 L 109.44 171.36 L 109.44 202.56 L 109.68 202.56 L 109.68 171.36 L 109.92 171.36 L 109.92 202.56 L 110.16 204.96 L 110.16 171.36 L 110.4 171.36 L 110.4 202.56 L 110.64 202.56 L 110.64 168.96 L 110.88 171.36 L 110.88 202.56 L 111.12 202.56 L 111.12 171.36 L 111.36 171.36 L 111.36 204.96 L 111.6 202.56 L 111.6 171.36 L 111.84 171.36 L 111.84 202.56 L 112.08 202.56 L 112.08 171.36 L 112.32 171.36 L 112.32 204.96 L 112.56 202.56 L 112.56 171.36 L 112.8 171.36 L 112.8 202.56 L 113.04 202.56 L 113.04 171.36 L 113.28 171.36 L 113.28 204.96 L 113.52 204.96 L 113.52 171.36 L 113.76 168.96 L 113.76 202.56 L 114 202.56 L 114 171.36 L 114.24 171.36 L 114.24 202.56 L 114.48 202.56 L 114.48 171.36 L 114.72 171.36 L 114.72 202.56 L 114.96 202.56 L 114.96 171.36 L 115.2 168.96 L 115.2 202.56 L 115.44 202.56 L 115.44 168.96 L 115.68 171.36 L 115.68 202.56 L 115.92 202.56 L 115.92 171.36 L 116.16 171.36 L 116.16 204.96 L 116.4 202.56 L 116.4 171.36 L 116.64 171.36 L 116.64 202.56 L 116.88 202.56 L 116.88 171.36 L 117.12 171.36 L 117.12 202.56 L 117.36 204.96 L 117.36 171.36 L 117.6 171.36 L 117.6 202.56 L 117.84 202.56 L 117.84 171.36 L 118.08 171.36 L 118.08 202.56 L 118.32 202.56 L 118.32 171.36 L 118.56 171.36 L 118.56 202.56 L 118.8 202.56 L 118.8 171.36 L 119.04 171.36 L 119.04 204.96 L 119.28 202.56 L 119.28 171.36 L 119.52 171.36 L 119.52 202.56 L 119.76 208.56 L 119.76 171.36 L 120 171.36 L 120 202.56 L 120.24 202.56 L 120.24 171.36 L 120.48 168.96 L 120.48 202.56 L 120.72 202.56 L 120.72 171.36 L 120.96 171.36 L 120.96 202.56 L 121.2 202.56 L 121.2 168.96 L 121.44 171.36 L 121.44 202.56 L 121.68 202.56 L 121.68 171.36 L 121.92 171.36 L 121.92 202.56 L 122.16 202.56 L 122.16 171.36 L 122.4 171.36 L 122.4 202.56 L 122.64 202.56 L 122.64 171.36 L 122.88 171.36 L 122.88 202.56 L 123.12 202.56 L 123.12 171.36 L 123.36 171.36 L 123.36 202.56 L 123.6 202.56 L 123.6 171.36 L 123.84 171.36 L 123.84 202.56 L 124.08 202.56 L 124.08 171.36 L 124.32 171.36 L 124.32 202.56 L 124.56 202.56 L 124.56 171.36 L 124.8 171.36 L 124.8 202.56 L 125.04 202.56 L 125.04 171.36 L 125.28 171.36 L 125.28 202.56 L 125.52 202.56 L 125.52 171.36 L 125.76 171.36 L 125.76 202.56 L 126 202.56 L 126 171.36 L 126.24 171.36 L 126.24 202.56 L 126.48 202.56 L 126.48 171.36 L 126.72 171.36 L 126.72 202.56 L 126.96 202.56 L 126.96 168.96 L 127.2 171.36 L 127.2 202.56 L 127.44 202.56 L 127.44 171.36 L 127.68 171.36 L 127.68 202.56 L 127.92 204.96 L 127.92 171.36 L 128.16 171.36 L 128.16 202.56 L 128.4 202.56 L 128.4 171.36 L 128.64 171.36 L 128.64 202.56 L 128.88 202.56 L 128.88 171.36 L 129.12 171.36 L 129.12 202.56 L 129.36 204.96 L 129.36 171.36 L 129.6 171.36 L 129.6 202.56 L 129.84 202.56 L 129.84 171.36 L 130.08 168.96 L 130.08 202.56 L 130.32 202.56 L 130.32 171.36 L 130.56 171.36 L 130.56 202.56 L 130.8 202.56 L 130.8 171.36 L 131.04 168.96 L 131.04 202.56 L 131.28 202.56 L 131.28 171.36 L 131.52 171.36 L 131.52 202.56 L 131.76 202.56 L 131.76 171.36 L 132 171.36 L 132 202.56 L 132.24 202.56 L 132.24 171.36 L 132.48 171.36 L 132.48 204.96 L 132.72 202.56 L 132.72 171.36 L 132.96 171.36 L 132.96 202.56 L 133.2 202.56 L 133.2 171.36 L 133.44 171.36 L 133.44 202.56 L 133.68 202.56 L 133.68 171.36 L 133.92 171.36 L 133.92 202.56 L 134.16 202.56 L 134.16 171.36 L 134.4 171.36 L 134.4 202.56 L 134.64 202.56 L 134.64 171.36 L 134.88 171.36 L 134.88 202.56 L 135.12 204.96 L 135.12 171.36 L 135.36 171.36 L 135.36 202.56 L 135.6 202.56 L 135.6 171.36 L 135.84 171.36 L 135.84 202.56 L 136.08 202.56 L 136.08 171.36 L 136.32 171.36 L 136.32 202.56 L 136.56 202.56 L 136.56 171.36 L 136.8 171.36 L 136.8 202.56 L 137.04 202.56 L 137.04 168.96 L 137.28 166.56 L 137.28 202.56 L 137.52 202.56 L 137.52 171.36 L 137.76 171.36 L 137.76 202.56 L 138 207.36 L 138 171.36 L 138.24 168.96 L 138.24 202.56 L 138.48 202.56 L 138.48 171.36 L 138.72 171.36 L 138.72 202.56 L 138.96 204.96 L 138.96 171.36 L 139.2 171.36 L 139.2 202.56 L 139.44 204.96 L 139.44 171.36 L 139.68 171.36 L 139.68 202.56 L 139.92 202.56 L 139.92 171.36 L 140.16 171.36 L 140.16 202.56 L 140.4 202.56 L 140.4 171.36 L 140.64 168.96 L 140.64 204.96 L 140.88 202.56 L 140.88 171.36 L 141.12 171.36 L 141.12 202.56 L 141.36 202.56 L 141.36 171.36 L 141.6 171.36 L 141.6 204.96 L 141.84 202.56 L 141.84 171.36 L 142.08 171.36 L 142.08 202.56 L 142.32 202.56 L 142.32 171.36 L 142.56 171.36 L 142.56 202.56 L 142.8 202.56 L 142.8 171.36 L 143.04 171.36 L 143.04 202.56 L 143.28 202.56 L 143.28 171.36 L 143.52 171.36 L 143.52 202.56 L 143.76 202.56 L 143.76 171.36 L 144 171.36 L 144 202.56 L 144.24 202.56 L 144.24 171.36 L 144.48 168.96 L 144.48 202.56 L 144.72 204.96 L 144.72 171.36 L 144.96 171.36 L 144.96 202.56 L 145.2 202.56 L 145.2 171.36 L 145.44 171.36 L 145.44 202.56 L 145.68 204.96 L 145.68 171.36 L 145.92 171.36 L 145.92 202.56 L 146.16 202.56 L 146.16 171.36 L 146.4 168.96 L 146.4 202.56 L 146.64 202.56 L 146.64 171.36 L 146.88 171.36 L 146.88 202.56 L 147.12 202.56 L 147.12 171.36 L 147.36 171.36 L 147.36 207.36 L 147.6 202.56 L 147.6 171.36 L 147.84 171.36 L 147.84 202.56 L 148.08 202.56 L 148.08 168.96 L 148.32 171.36 L 148.32 202.56 L 148.56 202.56 L 148.56 171.36 L 148.8 171.36 L 148.8 202.56 L 149.04 202.56 L 149.04 171.36 L 149.28 171.36 L 149.28 202.56 L 149.52 204.96 L 149.52 171.36 L 149.76 168.96 L 149.76 204.96 L 150 202.56 L 150 168.96 L 150.24 171.36 L 150.24 202.56 L 150.48 202.56 L 150.48 171.36 L 150.72 171.36 L 150.72 202.56 L 150.96 204.96 L 150.96 168.96 L 151.2 171.36 L 151.2 202.56 L 151.44 202.56 L 151.44 171.36 L 151.68 171.36 L 151.68 202.56 L 151.92 202.56 L 151.92 171.36 L 152.16 171.36 L 152.16 202.56 L 152.4 202.56 L 152.4 171.36 L 152.64 171.36 L 152.64 204.96 L 152.88 202.56 L 152.88 171.36 L 153.12 168.96 L 153.12 202.56 L 153.36 204.96 L 153.36 171.36 L 153.6 171.36 L 153.6 202.56 L 153.84 204.96 L 153.84 171.36 L 154.08 171.36 L 154.08 202.56 L 154.32 202.56 L 154.32 171.36 L 154.56 171.36 L 154.56 202.56 L 154.8 202.56 L 154.8 171.36 L 155.04 171.36 L 155.04 202.56 L 155.28 202.56 L 155.28 171.36 L 155.52 171.36 L 155.52 202.56 L 155.76 202.56 L 155.76 171.36 L 156 171.36 L 156 202.56 L 156.24 202.56 L 156.24 171.36 L 156.48 171.36 L 156.48 202.56 L 156.72 202.56 L 156.72 171.36 L 156.96 171.36 L 156.96 202.56 L 157.2 202.56 L 157.2 171.36 L 157.44 168.96 L 157.44 202.56 L 157.68 202.56 L 157.68 171.36 L 157.92 171.36 L 157.92 204.96 L 158.16 202.56 L 158.16 171.36 L 158.4 171.36 L 158.4 202.56 L 158.64 202.56 L 158.64 171.36 L 158.88 171.36 L 158.88 202.56 L 159.12 202.56 L 159.12 171.36 L 159.36 168.96 L 159.36 202.56 L 159.6 202.56 L 159.6 171.36 L 159.84 171.36 L 159.84 202.56 L 160.08 202.56 L 160.08 171.36 L 160.32 171.36 L 160.32 202.56 L 160.56 202.56 L 160.56 171.36 L 160.8 171.36 L 160.8 202.56 L 161.04 202.56 L 161.04 168.96 L 161.28 171.36 L 161.28 207.36 L 161.52 202.56 L 161.52 171.36 L 161.76 168.96 L 161.76 204.96 L 162 204.96 L 162 171.36 L 162.24 171.36 L 162.24 202.56 L 162.48 202.56 L 162.48 171.36 L 162.72 171.36 L 162.72 207.36 L 162.96 202.56 L 162.96 171.36 L 163.2 171.36 L 163.2 202.56 L 163.44 202.56 L 163.44 171.36 L 163.68 168.96 L 163.68 202.56 L 163.92 202.56 L 163.92 171.36 L 164.16 171.36 L 164.16 202.56 L 164.4 202.56 L 164.4 171.36 L 164.64 171.36 L 164.64 202.56 L 164.88 202.56 L 164.88 168.96 L 165.12 171.36 L 165.12 202.56 L 165.36 202.56 L 165.36 171.36 L 165.6 171.36 L 165.6 202.56 L 165.84 202.56 L 165.84 168.96 L 166.08 171.36 L 166.08 202.56 L 166.32 202.56 L 166.32 171.36 L 166.56 171.36 L 166.56 202.56 L 166.8 202.56 L 166.8 168.96 L 167.04 171.36 L 167.04 202.56 L 167.28 202.56 L 167.28 171.36 L 167.52 168.96 L 167.52 202.56 L 167.76 202.56 L 167.76 171.36 L 168 171.36 L 168 202.56 L 168.24 202.56 L 168.24 171.36 L 168.48 171.36 L 168.48 202.56 L 168.72 202.56 L 168.72 171.36 L 168.96 171.36 L 168.96 202.56 L 169.2 202.56 L 169.2 171.36 L 169.44 171.36 L 169.44 202.56 L 169.68 202.56 L 169.68 171.36 L 169.92 168.96 L 169.92 202.56 L 170.16 202.56 L 170.16 171.36 L 170.4 171.36 L 170.4 202.56 L 170.64 202.56 L 170.64 171.36 L 170.88 171.36 L 170.88 207.36 L 171.12 202.56 L 171.12 171.36 L 171.36 168.96 L 171.36 202.56 L 171.6 202.56 L 171.6 171.36 L 171.84 171.36 L 171.84 202.56 L 172.08 202.56 L 172.08 164.16 L 172.32 171.36 L 172.32 202.56 L 172.56 202.56 L 172.56 171.36 L 172.8 171.36 L 172.8 204.96 L 173.04 202.56 L 173.04 168.96 L 173.28 171.36 L 173.28 204.96 L 173.52 204.96 L 173.52 171.36 L 173.76 171.36 L 173.76 202.56 L 174 202.56 L 174 171.36 L 174.24 171.36 L 174.24 204.96 L 174.48 202.56 L 174.48 171.36 L 174.72 171.36 L 174.72 202.56 L 174.96 202.56 L 174.96 171.36 L 175.2 171.36 L 175.2 202.56 L 175.44 202.56 L 175.44 171.36 L 175.68 171.36 L 175.68 202.56 L 175.92 202.56 L 175.92 171.36 L 176.16 171.36 L 176.16 202.56 L 176.4 204.96 L 176.4 171.36 L 176.64 171.36 L 176.64 202.56 L 176.88 202.56 L 176.88 171.36 L 177.12 171.36 L 177.12 202.56 L 177.36 202.56 L 177.36 171.36 L 177.6 171.36 L 177.6 202.56 L 177.84 202.56 L 177.84 171.36 L 178.08 168.96 L 178.08 202.56 L 178.32 202.56 L 178.32 171.36 L 178.56 168.96 L 178.56 202.56 L 178.8 202.56 L 178.8 171.36 L 179.04 171.36 L 179.04 202.56 L 179.28 202.56 L 179.28 171.36 L 179.52 171.36 L 179.52 202.56 L 179.76 202.56 L 179.76 171.36 L 180 171.36 L 180 204.96 L 180.24 202.56 L 180.24 171.36 L 180.48 171.36 L 180.48 202.56 L 180.72 202.56 L 180.72 171.36 L 180.96 168.96 L 180.96 202.56 L 181.2 202.56 L 181.2 171.36 L 181.44 171.36 L 181.44 202.56 L 181.68 202.56 L 181.68 171.36 L 181.92 171.36 L 181.92 202.56 L 182.16 204.96 L 182.16 171.36 L 182.4 168.96 L 182.4 202.56 L 182.64 202.56 L 182.64 171.36 L 182.88 171.36 L 182.88 202.56 L 183.12 202.56 L 183.12 171.36 L 183.36 171.36 L 183.36 202.56 L 183.6 202.56 L 183.6 171.36 L 183.84 171.36 L 183.84 202.56 L 184.08 202.56 L 184.08 171.36 L 184.32 171.36 L 184.32 202.56 L 184.56 202.56 L 184.56 171.36 L 184.8 171.36 L 184.8 202.56 L 185.04 202.56 L 185.04 171.36 L 185.28 171.36 L 185.28 202.56 L 185.52 202.56 L 185.52 171.36 L 185.76 171.36 L 185.76 202.56 L 186 202.56 L 186 171.36 L 186.24 171.36 L 186.24 204.96 L 186.48 202.56 L 186.48 171.36 L 186.72 168.96 L 186.72 202.56 L 186.96 202.56 L 186.96 171.36 L 187.2 171.36 L 187.2 202.56 L 187.44 202.56 L 187.44 171.36 L 187.68 171.36 L 187.68 202.56 L 187.92 202.56 L 187.92 171.36 L 188.16 171.36 L 188.16 202.56 L 188.4 202.56 L 188.4 171.36 L 188.64 171.36 L 188.64 212.16 L 188.88 202.56 L 188.88 171.36 L 189.12 171.36 L 189.12 202.56 L 189.36 202.56 L 189.36 171.36 L 189.6 171.36 L 189.6 204.96 L 189.84 204.96 L 189.84 168.96 L 190.08 171.36 L 190.08 204.96 L 190.32 202.56 L 190.32 171.36 L 190.56 171.36 L 190.56 202.56 L 190.8 202.56 L 190.8 171.36 L 191.04 171.36 L 191.04 202.56 L 191.28 202.56 L 191.28 168.96 L 191.52 171.36 L 191.52 202.56 L 191.76 204.96 L 191.76 171.36 L 192 171.36 L 192 202.56 L 192.24 202.56 L 192.24 171.36 L 192.48 166.56 L 192.48 202.56 L 192.72 202.56 L 192.72 171.36 L 192.96 171.36 L 192.96 202.56 L 193.2 202.56 L 193.2 171.36 L 193.44 171.36 L 193.44 202.56 L 193.68 202.56 L 193.68 171.36 L 193.92 171.36 L 193.92 202.56 L 194.16 202.56 L 194.16 168.96 L 194.4 171.36 L 194.4 202.56 L 194.64 202.56 L 194.64 171.36 L 194.88 171.36 L 194.88 202.56 L 195.12 202.56 L 195.12 168.96 L 195.36 171.36 L 195.36 204.96 L 195.6 202.56 L 195.6 171.36 L 195.84 171.36 L 195.84 202.56 L 196.08 202.56 L 196.08 171.36 L 196.32 168.96 L 196.32 202.56 L 196.56 202.56 L 196.56 171.36 L 196.8 168.96 L 196.8 202.56 L 197.04 202.56 L 197.04 171.36 L 197.28 171.36 L 197.28 204.96 L 197.52 202.56 L 197.52 171.36 L 197.76 171.36 L 197.76 202.56 L 198 202.56 L 198 171.36 L 198.24 168.96 L 198.24 204.96 L 198.48 202.56 L 198.48 166.56 L 198.72 171.36 L 198.72 202.56 L 198.96 202.56 L 198.96 171.36 L 199.2 171.36 L 199.2 202.56 L 199.44 202.56 L 199.44 171.36 L 199.68 171.36 L 199.68 202.56 L 199.92 202.56 L 199.92 171.36 L 200.16 171.36 L 200.16 202.56 L 200.4 202.56 L 200.4 168.96 L 200.64 168.96 L 200.64 202.56 L 200.88 202.56 L 200.88 168.96 L 201.12 168.96 L 201.12 202.56 L 201.36 202.56 L 201.36 168.96 L 201.6 171.36 L 201.6 202.56 L 201.84 202.56 L 201.84 168.96 L 202.08 171.36 L 202.08 202.56 L 202.32 202.56 L 202.32 171.36 L 202.56 171.36 L 202.56 202.56 L 202.8 202.56 L 202.8 168.96 L 203.04 171.36 L 203.04 202.56 L 203.28 204.96 L 203.28 171.36 L 203.52 171.36 L 203.52 202.56 L 203.76 202.56 L 203.76 168.96 L 204 171.36 L 204 202.56 L 204.24 204.96 L 204.24 171.36 L 204.48 171.36 L 204.48 202.56 L 204.72 202.56 L 204.72 171.36 L 204.96 171.36 L 204.96 202.56 L 205.2 202.56 L 205.2 171.36 L 205.44 171.36 L 205.44 202.56 L 205.68 204.96 L 205.68 171.36 L 205.92 168.96 L 205.92 202.56 L 206.16 202.56 L 206.16 171.36 L 206.4 171.36 L 206.4 202.56 L 206.64 202.56 L 206.64 171.36 L 206.88 171.36 L 206.88 202.56 L 207.12 204.96 L 207.12 171.36 L 207.36 171.36 L 207.36 202.56 L 207.6 202.56 L 207.6 171.36 L 207.84 171.36 L 207.84 202.56 L 208.08 202.56 L 208.08 171.36 L 208.32 171.36 L 208.32 207.36 L 208.56 202.56 L 208.56 171.36 L 208.8 171.36 L 208.8 202.56 L 209.04 202.56 L 209.04 171.36 L 209.28 171.36 L 209.28 202.56 L 209.52 202.56 L 209.52 171.36 L 209.76 171.36 L 209.76 202.56 L 210 202.56 L 210 171.36 L 210.24 168.96 L 210.24 202.56 L 210.48 202.56 L 210.48 171.36 L 210.72 171.36 L 210.72 202.56 L 210.96 202.56 L 210.96 171.36 L 211.2 171.36 L 211.2 202.56 L 211.44 202.56 L 211.44 171.36 L 211.68 171.36 L 211.68 202.56 L 211.92 202.56 L 211.92 171.36 L 212.16 171.36 L 212.16 204.96 L 212.4 202.56 L 212.4 171.36 L 212.64 171.36 L 212.64 202.56 L 212.88 202.56 L 212.88 171.36 L 213.12 171.36 L 213.12 202.56 L 213.36 204.96 L 213.36 171.36 L 213.6 171.36 L 213.6 202.56 L 213.84 202.56 L 213.84 171.36 L 214.08 171.36 L 214.08 202.56 L 214.32 202.56 L 214.32 171.36 L 214.56 168.96 L 214.56 202.56 L 214.8 202.56 L 214.8 168.96 L 215.04 171.36 L 215.04 202.56 L 215.28 202.56 L 215.28 171.36 L 215.52 168.96 L 215.52 202.56 L 215.76 202.56 L 215.76 171.36 L 216 171.36 L 216 204.96 L 216.24 202.56 L 216.24 171.36 L 216.48 171.36 L 216.48 202.56 L 216.72 202.56 L 216.72 171.36 L 216.96 171.36 L 216.96 202.56 L 217.2 202.56 L 217.2 171.36 L 217.44 171.36 L 217.44 202.56 L 217.68 202.56 L 217.68 171.36 L 217.92 171.36 L 217.92 202.56 L 218.16 204.96 L 218.16 166.56 L 218.4 171.36 L 218.4 202.56 L 218.64 202.56 L 218.64 171.36 L 218.88 171.36 L 218.88 202.56 L 219.12 202.56 L 219.12 171.36 L 219.36 168.96 L 219.36 202.56 L 219.6 202.56 L 219.6 171.36 L 219.84 171.36 L 219.84 204.96 L 220.08 202.56 L 220.08 168.96 L 220.32 171.36 L 220.32 202.56 L 220.56 202.56 L 220.56 171.36 L 220.8 171.36 L 220.8 202.56 L 221.04 202.56 L 221.04 171.36 L 221.28 171.36 L 221.28 202.56 L 221.52 202.56 L 221.52 171.36 L 221.76 171.36 L 221.76 202.56 L 222 202.56 L 222 171.36 L 222.24 171.36 L 222.24 202.56 L 222.48 202.56 L 222.48 168.96 L 222.72 168.96 L 222.72 202.56 L 222.96 202.56 L 222.96 171.36 L 223.2 168.96 L 223.2 202.56 L 223.44 202.56 L 223.44 171.36 L 223.68 171.36 L 223.68 202.56 L 223.92 202.56 L 223.92 171.36 L 224.16 171.36 L 224.16 202.56 L 224.4 202.56 L 224.4 171.36 L 224.64 171.36 L 224.64 204.96 L 224.88 202.56 L 224.88 168.96 L 225.12 168.96 L 225.12 202.56 L 225.36 202.56 L 225.36 171.36 L 225.6 171.36 L 225.6 202.56 L 225.84 202.56 L 225.84 171.36 L 226.08 168.96 L 226.08 202.56 L 226.32 202.56 L 226.32 168.96 L 226.56 168.96 L 226.56 202.56 L 226.8 202.56 L 226.8 168.96 L 227.04 168.96 L 227.04 204.96 L 227.28 202.56 L 227.28 168.96 L 227.52 168.96 L 227.52 202.56 L 227.76 202.56 L 227.76 171.36 L 228 168.96 L 228 202.56 L 228.24 202.56 L 228.24 168.96 L 228.48 168.96 L 228.48 204.96 L 228.72 202.56 L 228.72 168.96 L 228.96 168.96 L 228.96 202.56 L 229.2 202.56 L 229.2 168.96 L 229.44 166.56 L 229.44 202.56 L 229.68 202.56 L 229.68 171.36 L 229.92 168.96 L 229.92 202.56 L 230.16 202.56 L 230.16 166.56 L 230.4 166.56 L 230.4 202.56 L 230.64 202.56 L 230.64 171.36 L 230.88 168.96 L 230.88 202.56 L 231.12 202.56 L 231.12 171.36 L 231.36 168.96 L 231.36 202.56 L 231.6 202.56 L 231.6 171.36 L 231.84 168.96 L 231.84 202.56 L 232.08 204.96 L 232.08 168.96 L 232.32 166.56 L 232.32 202.56 L 232.56 202.56 L 232.56 168.96 L 232.8 168.96 L 232.8 202.56 L 233.04 202.56 L 233.04 168.96 L 233.28 171.36 L 233.28 202.56 L 233.52 204.96 L 233.52 171.36 L 233.76 168.96 L 233.76 202.56 L 234 202.56 L 234 168.96 L 234.24 168.96 L 234.24 202.56 L 234.48 204.96 L 234.48 168.96 L 234.72 168.96 L 234.72 202.56 L 234.96 202.56 L 234.96 168.96 L 235.2 168.96 L 235.2 202.56 L 235.44 202.56 L 235.44 168.96 L 235.68 168.96 L 235.68 202.56 L 235.92 202.56 L 235.92 168.96 L 236.16 168.96 L 236.16 202.56 L 236.4 202.56 L 236.4 168.96 L 236.64 168.96 L 236.64 204.96 L 236.88 202.56 L 236.88 168.96 L 237.12 166.56 L 237.12 202.56 L 237.36 202.56 L 237.36 168.96 L 237.6 168.96 L 237.6 202.56 L 237.84 202.56 L 237.84 168.96 L 238.08 168.96 L 238.08 202.56 L 238.32 202.56 L 238.32 166.56 L 238.56 168.96 L 238.56 202.56 L 238.8 202.56 L 238.8 168.96 L 239.04 166.56 L 239.04 202.56 L 239.28 202.56 L 239.28 168.96 L 239.52 168.96 L 239.52 202.56 L 239.76 204.96 L 239.76 168.96 L 240 168.96 L 240 204.96 L 240.24 204.96 L 240.24 166.56 L 240.48 168.96 L 240.48 202.56 L 240.72 202.56 L 240.72 166.56 L 240.96 168.96 L 240.96 202.56 L 241.2 202.56 L 241.2 168.96 L 241.44 168.96 L 241.44 202.56 L 241.68 202.56 L 241.68 168.96 L 241.92 168.96 L 241.92 202.56 L 242.16 202.56 L 242.16 166.56 L 242.4 168.96 L 242.4 202.56 L 242.64 202.56 L 242.64 168.96 L 242.88 168.96 L 242.88 202.56 L 243.12 202.56 L 243.12 168.96 L 243.36 87.36 L 243.36 202.56 L 243.6 202.56 L 243.6 168.96 L 243.84 168.96 L 243.84 202.56 L 244.08 202.56 L 244.08 168.96 L 244.32 166.56 L 244.32 202.56 L 244.56 202.56 L 244.56 168.96 L 244.8 168.96 L 244.8 202.56 L 245.04 202.56 L 245.04 166.56 L 245.28 164.16 L 245.28 200.16 L 245.52 200.16 L 245.52 159.36 L 245.76 159.36 L 245.76 197.76 L 246 195.36 L 246 159.36 L 246.24 161.76 L 246.24 197.76 L 246.48 195.36 L 246.48 159.36 L 246.72 159.36 L 246.72 195.36 L 246.96 195.36 L 246.96 156.96 L 247.2 159.36 L 247.2 195.36 L 247.44 195.36 L 247.44 159.36 L 247.68 159.36 L 247.68 195.36 L 247.92 195.36 L 247.92 159.36 L 248.16 159.36 L 248.16 195.36 L 248.4 195.36 L 248.4 156.96 L 248.64 161.76 L 248.64 195.36 L 248.88 197.76 L 248.88 164.16 L 249.12 166.56 L 249.12 200.16 L 249.36 202.56 L 249.36 168.96 L 249.6 166.56 L 249.6 204.96 L 249.84 202.56 L 249.84 168.96 L 250.08 168.96 L 250.08 202.56 L 250.32 204.96 L 250.32 168.96 L 250.56 171.36 L 250.56 204.96 L 250.8 202.56 L 250.8 168.96 L 251.04 168.96 L 251.04 202.56 L 251.28 202.56 L 251.28 168.96 L 251.52 168.96 L 251.52 202.56 L 251.76 202.56 L 251.76 168.96 L 252 171.36 L 252 202.56 L 252.24 202.56 L 252.24 171.36 L 252.48 168.96 L 252.48 204.96 L 252.72 202.56 L 252.72 171.36 L 252.96 168.96 L 252.96 204.96 L 253.2 204.96 L 253.2 171.36 L 253.44 171.36 L 253.44 202.56 L 253.68 212.16 L 253.68 166.56 L 253.92 168.96 L 253.92 200.16 L 254.16 200.16 L 254.16 171.36 L 254.4 168.96 L 254.4 200.16 L 254.64 200.16 L 254.64 168.96 L 254.88 168.96 L 254.88 200.16 L 255.12 202.56 L 255.12 171.36 L 255.36 168.96 L 255.36 202.56 L 255.6 200.16 L 255.6 168.96 L 255.84 171.36 L 255.84 200.16 L 256.08 202.56 L 256.08 164.16 L 256.32 118.56 L 256.32 200.16 L 256.56 200.16 L 256.56 171.36 L 256.8 166.56 L 256.8 200.16 L 257.04 200.16 L 257.04 166.56 L 257.28 161.76 L 257.28 200.16 L 257.52 200.16 L 257.52 161.76 L 257.76 161.76 L 257.76 200.16 L 258 202.56 L 258 159.36 L 258.24 161.76 L 258.24 200.16 L 258.48 202.56 L 258.48 161.76 L 258.72 161.76 L 258.72 200.16 L 258.96 200.16 L 258.96 161.76 L 259.2 161.76 L 259.2 202.56 L 259.44 200.16 L 259.44 161.76 L 259.68 161.76 L 259.68 202.56 L 259.92 202.56 L 259.92 159.36 L 260.16 159.36 L 260.16 204.96 L 260.4 208.56 L 260.4 161.76 L 260.64 159.36 L 260.64 207.36 L 260.88 204.96 L 260.88 156.96 L 261.12 159.36 L 261.12 202.56 L 261.36 204.96 L 261.36 161.76 L 261.6 161.76 L 261.6 202.56 L 261.84 202.56 L 261.84 161.76 L 262.08 164.16 L 262.08 202.56 L 262.32 204.96 L 262.32 161.76 L 262.56 161.76 L 262.56 204.96 L 262.8 204.96 L 262.8 164.16 L 263.04 156.96 L 263.04 204.96 L 263.28 204.96 L 263.28 152.16 L 263.52 156.96 L 263.52 204.96 L 263.76 202.56 L 263.76 161.76 L 264 68.16 L 264 200.16 L 264.24 200.16 L 264.24 164.16 L 264.48 161.76 L 264.48 195.36 L 264.72 195.36 L 264.72 164.16 L 264.96 164.16 L 264.96 195.36 L 265.2 197.76 L 265.2 164.16 L 265.44 164.16 L 265.44 197.76 L 265.68 195.36 L 265.68 161.76 L 265.92 161.76 L 265.92 195.36 L 266.16 195.36 L 266.16 161.76 L 266.4 164.16 L 266.4 195.36 L 266.64 197.76 L 266.64 161.76 L 266.88 164.16 L 266.88 197.76 L 267.12 195.36 L 267.12 164.16 L 267.36 161.76 L 267.36 195.36 L 267.6 195.36 L 267.6 159.36 L 267.84 164.16 L 267.84 197.76 L 268.08 202.56 L 268.08 164.16 L 268.32 166.56 L 268.32 202.56 L 268.56 202.56 L 268.56 164.16 L 268.8 166.56 L 268.8 202.56 L 269.04 202.56 L 269.04 166.56 L 269.28 166.56 L 269.28 202.56 L 269.52 204.96 L 269.52 166.56 L 269.76 166.56 L 269.76 202.56 L 270 204.96 L 270 166.56 L 270.24 166.56 L 270.24 202.56 L 270.48 204.96 L 270.48 161.76 L 270.72 166.56 L 270.72 202.56 L 270.96 202.56 L 270.96 166.56 L 271.2 164.16 L 271.2 202.56 L 271.44 202.56 L 271.44 166.56 L 271.68 166.56 L 271.68 202.56 L 271.92 202.56 L 271.92 164.16 L 272.16 166.56 L 272.16 200.16 L 272.4 200.16 L 272.4 164.16 L 272.64 166.56 L 272.64 200.16 L 272.88 200.16 L 272.88 164.16 L 273.12 164.16 L 273.12 200.16 L 273.36 202.56 L 273.36 164.16 L 273.6 164.16 L 273.6 200.16 L 273.84 212.16 L 273.84 164.16 L 274.08 164.16 L 274.08 212.16 L 274.32 214.56 L 274.32 164.16 L 274.56 92.16 L 274.56 212.16 L 274.8 212.16 L 274.8 168.96 L 275.04 180.96 L 275.04 212.16 L 275.28 214.56 L 275.28 178.56 L 275.52 180.96 L 275.52 212.16 L 275.76 212.16 L 275.76 161.76 L 276 171.36 L 276 212.16 L 276.24 212.16 L 276.24 180.96 L 276.48 173.76 L 276.48 212.16 L 276.72 212.16 L 276.72 178.56 L 276.96 178.56 L 276.96 212.16 L 277.2 212.16 L 277.2 178.56 L 277.44 176.16 L 277.44 212.16 L 277.68 212.16 L 277.68 178.56 L 277.92 178.56 L 277.92 214.56 L 278.16 212.16 L 278.16 180.96 L 278.4 180.96 L 278.4 212.16 L 278.64 212.16 L 278.64 180.96 L 278.88 178.56 L 278.88 212.16 L 279.12 212.16 L 279.12 176.16 L 279.36 178.56 L 279.36 212.16 L 279.6 209.76 L 279.6 178.56 L 279.84 180.96 L 279.84 209.76 L 280.08 212.16 L 280.08 178.56 L 280.32 176.16 L 280.32 209.76 L 280.56 209.76 L 280.56 173.76 L 280.8 176.16 L 280.8 209.76 L 281.04 209.76 L 281.04 173.76 L 281.28 173.76 L 281.28 209.76 L 281.52 209.76 L 281.52 173.76 L 281.76 171.36 L 281.76 209.76 L 282 209.76 L 282 178.56 L 282.24 178.56 L 282.24 209.76 L 282.48 209.76 L 282.48 176.16 L 282.72 173.76 L 282.72 209.76 L 282.96 212.16 L 282.96 178.56 L 283.2 173.76 L 283.2 209.76 L 283.44 212.16 L 283.44 178.56 L 283.68 178.56 L 283.68 212.16 L 283.92 209.76 L 283.92 178.56 L 284.16 176.16 L 284.16 212.16 L 284.4 216.96 L 284.4 168.96 L 284.64 166.56 L 284.64 209.76 L 284.88 209.76 L 284.88 171.36 L 285.12 178.56 L 285.12 212.16 L 285.36 212.16 L 285.36 171.36 L 285.6 173.76 L 285.6 212.16 L 285.84 212.16 L 285.84 176.16 L 286.08 87.36 L 286.08 212.16 L 286.32 212.16 L 286.32 173.76 L 286.56 176.16 L 286.56 212.16 L 286.8 212.16 L 286.8 176.16 L 287.04 176.16 L 287.04 212.16 L 287.28 212.16 L 287.28 176.16 L 287.52 173.76 L 287.52 212.16 L 287.76 212.16 L 287.76 176.16 L 288 173.76 L 288 212.16 L 288.24 212.16 L 288.24 176.16 L 288.48 176.16 L 288.48 212.16 L 288.72 212.16 L 288.72 178.56 L 288.96 173.76 L 288.96 209.76 L 289.2 207.36 L 289.2 164.16 L 289.44 154.56 L 289.44 207.36 L 289.68 207.36 L 289.68 166.56 L 289.92 168.96 L 289.92 207.36 L 290.16 207.36 L 290.16 171.36 L 290.4 173.76 L 290.4 207.36 L 290.64 207.36 L 290.64 168.96 L 290.88 171.36 L 290.88 209.76 L 291.12 209.76 L 291.12 176.16 L 291.36 176.16 L 291.36 207.36 L 291.6 207.36 L 291.6 178.56 L 291.84 176.16 L 291.84 207.36 L 292.08 212.16 L 292.08 176.16 L 292.32 171.36 L 292.32 207.36 L 292.56 207.36 L 292.56 173.76 L 292.8 173.76 L 292.8 212.16 L 293.04 207.36 L 293.04 173.76 L 293.28 176.16 L 293.28 207.36 L 293.52 207.36 L 293.52 178.56 L 293.76 108.96 L 293.76 207.36 L 294 207.36 L 294 173.76 L 294.24 176.16 L 294.24 207.36 L 294.48 209.76 L 294.48 176.16 L 294.72 173.76 L 294.72 207.36 L 294.96 209.76 L 294.96 178.56 L 295.2 164.16 L 295.2 207.36 L 295.44 207.36 L 295.44 168.96 L 295.68 161.76 L 295.68 207.36 L 295.92 207.36 L 295.92 161.76 L 296.16 166.56 L 296.16 207.36 L 296.4 207.36 L 296.4 166.56 L 296.64 173.76 L 296.64 207.36 L 296.88 204.96 L 296.88 173.76 L 297.12 173.76 L 297.12 204.96 L 297.36 204.96 L 297.36 176.16 L 297.6 171.36 L 297.6 204.96 L 297.84 207.36 L 297.84 176.16 L 298.08 171.36 L 298.08 209.76 L 298.32 209.76 L 298.32 173.76 L 298.56 176.16 L 298.56 209.76 L 298.8 209.76 L 298.8 176.16 L 299.04 176.16 L 299.04 209.76 L 299.28 209.76 L 299.28 176.16 L 299.52 173.76 L 299.52 209.76 L 299.76 209.76 L 299.76 176.16 L 300 176.16 L 300 212.16 L 300.24 209.76 L 300.24 166.56 L 300.48 171.36 L 300.48 209.76 L 300.72 209.76 L 300.72 171.36 L 300.96 173.76 L 300.96 209.76 L 301.2 209.76 L 301.2 176.16 L 301.44 173.76 L 301.44 209.76 L 301.68 209.76 L 301.68 176.16 L 301.92 176.16 L 301.92 209.76 L 302.16 209.76 L 302.16 173.76 L 302.4 173.76 L 302.4 207.36 L 302.64 207.36 L 302.64 176.16 L 302.88 72.96 L 302.88 216.96 L 303.12 207.36 L 303.12 176.16 L 303.36 176.16 L 303.36 204.96 L 303.6 207.36 L 303.6 173.76 L 303.84 171.36 L 303.84 204.96 L 304.08 204.96 L 304.08 166.56 L 304.32 164.16 L 304.32 204.96 L 304.56 207.36 L 304.56 168.96 L 304.8 171.36 L 304.8 204.96 L 305.04 204.96 L 305.04 173.76 L 305.28 176.16 L 305.28 204.96 L 305.52 204.96 L 305.52 173.76 L 305.76 173.76 L 305.76 204.96 L 306 204.96 L 306 168.96 L 306.24 176.16 L 306.24 207.36 L 306.48 207.36 L 306.48 171.36 L 306.72 173.76 L 306.72 204.96 L 306.96 204.96 L 306.96 140.16 L 307.2 140.16 L 307.2 204.96 L 307.44 204.96 L 307.44 166.56 L 307.68 176.16 L 307.68 204.96 L 307.92 207.36 L 307.92 173.76 L 308.16 176.16 L 308.16 204.96 L 308.4 204.96 L 308.4 173.76 L 308.64 166.56 L 308.64 204.96 L 308.88 204.96 L 308.88 173.76 L 309.12 171.36 L 309.12 204.96 L 309.36 207.36 L 309.36 173.76 L 309.6 173.76 L 309.6 204.96 L 309.84 204.96 L 309.84 171.36 L 310.08 171.36 L 310.08 202.56 L 310.32 204.96 L 310.32 166.56 L 310.56 161.76 L 310.56 204.96 L 310.8 204.96 L 310.8 168.96 L 311.04 166.56 L 311.04 202.56 L 311.28 204.96 L 311.28 173.76 L 311.52 173.76 L 311.52 207.36 L 311.76 204.96 L 311.76 171.36 L 312 173.76 L 312 204.96 L 312.24 204.96 L 312.24 176.16 L 312.48 173.76 L 312.48 207.36 L 312.72 202.56 L 312.72 173.76 L 312.96 176.16 L 312.96 204.96 L 313.2 209.76 L 313.2 171.36 L 313.44 173.76 L 313.44 204.96 L 313.68 204.96 L 313.68 173.76 L 313.92 166.56 L 313.92 202.56 L 314.16 202.56 L 314.16 171.36 L 314.4 168.96 L 314.4 204.96 L 314.64 204.96 L 314.64 173.76 L 314.88 173.76 L 314.88 204.96 L 315.12 204.96 L 315.12 173.76 L 315.36 171.36 L 315.36 204.96 L 315.6 202.56 L 315.6 176.16 L 315.84 173.76 L 315.84 204.96 L 316.08 204.96 L 316.08 171.36 L 316.32 171.36 L 316.32 202.56 L 316.56 204.96 L 316.56 173.76 L 316.8 171.36 L 316.8 204.96 L 317.04 202.56 L 317.04 173.76 L 317.28 171.36 L 317.28 204.96 L 317.52 202.56 L 317.52 173.76 L 317.76 173.76 L 317.76 207.36 L 318 204.96 L 318 168.96 L 318.24 171.36 L 318.24 204.96 L 318.48 204.96 L 318.48 171.36 L 318.72 92.16 L 318.72 204.96 L 318.96 204.96 L 318.96 173.76 L 319.2 171.36 L 319.2 202.56 L 319.44 204.96 L 319.44 173.76 L 319.68 173.76 L 319.68 204.96 L 319.92 202.56 L 319.92 168.96 L 320.16 173.76 L 320.16 204.96 L 320.4 204.96 L 320.4 173.76 L 320.64 173.76 L 320.64 204.96 L 320.88 202.56 L 320.88 173.76 L 321.12 173.76 L 321.12 204.96 L 321.36 204.96 L 321.36 171.36 L 321.6 171.36 L 321.6 204.96 L 321.84 204.96 L 321.84 173.76 L 322.08 173.76 L 322.08 202.56 L 322.32 202.56 L 322.32 173.76 L 322.56 173.76 L 322.56 202.56 L 322.8 204.96 L 322.8 173.76 L 323.04 173.76 L 323.04 204.96 L 323.28 202.56 L 323.28 171.36 L 323.52 173.76 L 323.52 204.96 L 323.76 202.56 L 323.76 173.76 L 324 171.36 L 324 204.96 L 324.24 202.56 L 324.24 171.36 L 324.48 173.76 L 324.48 204.96 L 324.72 202.56 L 324.72 173.76 L 324.96 171.36 L 324.96 202.56 L 325.2 204.96 L 325.2 164.16 L 325.44 166.56 L 325.44 202.56 L 325.68 204.96 L 325.68 168.96 L 325.92 171.36 L 325.92 202.56 L 326.16 202.56 L 326.16 171.36 L 326.4 173.76 L 326.4 202.56 L 326.64 204.96 L 326.64 173.76 L 326.88 171.36 L 326.88 202.56 L 327.12 202.56 L 327.12 173.76 L 327.36 173.76 L 327.36 204.96 L 327.6 202.56 L 327.6 164.16 L 327.84 166.56 L 327.84 202.56 L 328.08 202.56 L 328.08 171.36 L 328.32 60.96 L 328.32 204.96 L 328.56 207.36 L 328.56 171.36 L 328.8 173.76 L 328.8 202.56 L 329.04 202.56 L 329.04 173.76 L 329.28 164.16 L 329.28 209.76 L 329.52 202.56 L 329.52 166.56 L 329.76 154.56 L 329.76 204.96 L 330 202.56 L 330 161.76 L 330.24 164.16 L 330.24 202.56 L 330.48 204.96 L 330.48 173.76 L 330.72 171.36 L 330.72 202.56 L 330.96 202.56 L 330.96 173.76 L 331.2 171.36 L 331.2 202.56 L 331.44 202.56 L 331.44 171.36 L 331.68 168.96 L 331.68 202.56 L 331.92 202.56 L 331.92 173.76 L 332.16 168.96 L 332.16 202.56 L 332.4 202.56 L 332.4 168.96 L 332.64 166.56 L 332.64 202.56 L 332.88 202.56 L 332.88 173.76 L 333.12 173.76 L 333.12 202.56 L 333.36 202.56 L 333.36 173.76 L 333.6 173.76 L 333.6 202.56 L 333.84 202.56 L 333.84 171.36 L 334.08 171.36 L 334.08 202.56 L 334.32 204.96 L 334.32 171.36 L 334.56 173.76 L 334.56 204.96 L 334.8 202.56 L 334.8 171.36 L 335.04 168.96 L 335.04 202.56 L 335.28 202.56 L 335.28 161.76 L 335.52 173.76 L 335.52 202.56 L 335.76 202.56 L 335.76 171.36 L 336 171.36 L 336 202.56 L 336.24 202.56 L 336.24 173.76 L 336.48 171.36 L 336.48 202.56 L 336.72 202.56 L 336.72 173.76 L 336.96 171.36 L 336.96 202.56 L 337.2 202.56 L 337.2 166.56 L 337.44 171.36 L 337.44 204.96 L 337.68 204.96 L 337.68 173.76 L 337.92 171.36 L 337.92 202.56 L 338.16 204.96 L 338.16 173.76 L 338.4 106.56 L 338.4 202.56 L 338.64 202.56 L 338.64 171.36 L 338.88 171.36 L 338.88 202.56 L 339.12 202.56 L 339.12 173.76 L 339.36 171.36 L 339.36 202.56 L 339.6 202.56 L 339.6 171.36 L 339.84 171.36 L 339.84 202.56 L 340.08 202.56 L 340.08 171.36 L 340.32 168.96 L 340.32 202.56 L 340.56 202.56 L 340.56 171.36 L 340.8 173.76 L 340.8 202.56 L 341.04 202.56 L 341.04 171.36 L 341.28 168.96 L 341.28 202.56 L 341.52 202.56 L 341.52 173.76 L 341.76 171.36 L 341.76 202.56 L 342 202.56 L 342 173.76 L 342.24 168.96 L 342.24 202.56 L 342.48 202.56 L 342.48 168.96 L 342.72 171.36 L 342.72 204.96 L 342.96 202.56 L 342.96 171.36 L 343.2 168.96 L 343.2 202.56 L 343.44 202.56 L 343.44 173.76 L 343.68 173.76 L 343.68 204.96 L 343.92 202.56 L 343.92 173.76 L 344.16 171.36 L 344.16 202.56 L 344.4 202.56 L 344.4 168.96 L 344.64 171.36 L 344.64 202.56 L 344.88 202.56 L 344.88 173.76 L 345.12 173.76 L 345.12 204.96 L 345.36 202.56 L 345.36 171.36 L 345.6 171.36 L 345.6 204.96 L 345.84 202.56 L 345.84 173.76 L 346.08 171.36 L 346.08 202.56 L 346.32 202.56 L 346.32 166.56 L 346.56 171.36 L 346.56 202.56 L 346.8 202.56 L 346.8 171.36 L 347.04 166.56 L 347.04 202.56 L 347.28 202.56 L 347.28 168.96 L 347.52 168.96 L 347.52 204.96 L 347.76 202.56 L 347.76 168.96 L 348 166.56 L 348 202.56 L 348.24 202.56 L 348.24 168.96 L 348.48 159.36 L 348.48 202.56 L 348.72 202.56 L 348.72 166.56 L 348.96 166.56 L 348.96 202.56 L 349.2 202.56 L 349.2 166.56 L 349.44 164.16 L 349.44 202.56 L 349.68 202.56 L 349.68 164.16 L 349.92 166.56 L 349.92 202.56 L 350.16 202.56 L 350.16 82.56 L 350.4 166.56 L 350.4 204.96 L 350.64 207.36 L 350.64 166.56 L 350.88 166.56 L 350.88 204.96 L 351.12 202.56 L 351.12 123.36 L 351.36 161.76 L 351.36 202.56 L 351.6 202.56 L 351.6 166.56 L 351.84 166.56 L 351.84 202.56 L 352.08 202.56 L 352.08 164.16 L 352.32 166.56 L 352.32 202.56 L 352.56 202.56 L 352.56 166.56 L 352.8 166.56 L 352.8 204.96 L 353.04 202.56 L 353.04 166.56 L 353.28 168.96 L 353.28 202.56 L 353.52 202.56 L 353.52 168.96 L 353.76 168.96 L 353.76 202.56 L 354 202.56 L 354 171.36 L 354.24 171.36 L 354.24 202.56 L 354.48 202.56 L 354.48 171.36 L 354.72 171.36 L 354.72 202.56 L 354.96 204.96 L 354.96 171.36 L 355.2 173.76 L 355.2 202.56 L 355.44 202.56 L 355.44 171.36 L 355.68 173.76 L 355.68 202.56 L 355.92 202.56 L 355.92 171.36 L 356.16 173.76 L 356.16 202.56 L 356.4 204.96 L 356.4 168.96 L 356.64 171.36 L 356.64 202.56 L 356.88 202.56 L 356.88 171.36 L 357.12 171.36 L 357.12 207.36 L 357.36 202.56 L 357.36 171.36 L 357.6 171.36 L 357.6 202.56 L 357.84 202.56 L 357.84 171.36 L 358.08 171.36 L 358.08 202.56 L 358.32 202.56 L 358.32 154.56 L 358.56 161.76 L 358.56 202.56 L 358.8 202.56 L 358.8 171.36 L 359.04 171.36 L 359.04 204.96 L 359.28 202.56 L 359.28 168.96 L 359.52 171.36 L 359.52 202.56 L 359.76 204.96 L 359.76 171.36 L 360 168.96 L 360 202.56 L 360.24 202.56 L 360.24 171.36 L 360.48 171.36 L 360.48 202.56 L 360.72 202.56 L 360.72 166.56 L 360.96 161.76 L 360.96 202.56 L 361.2 202.56 L 361.2 168.96 L 361.44 168.96 L 361.44 202.56 L 361.68 202.56 L 361.68 171.36 L 361.92 171.36 L 361.92 202.56 L 362.16 202.56 L 362.16 171.36 L 362.4 166.56 L 362.4 202.56 L 362.64 202.56 L 362.64 168.96 L 362.88 171.36 L 362.88 202.56 L 363.12 202.56 L 363.12 171.36 L 363.36 168.96 L 363.36 202.56 L 363.6 202.56 L 363.6 173.76 L 363.84 173.76 L 363.84 202.56 L 364.08 202.56 L 364.08 171.36 L 364.32 171.36 L 364.32 202.56 L 364.56 202.56 L 364.56 173.76 L 364.8 161.76 L 364.8 202.56 L 365.04 202.56 L 365.04 166.56 L 365.28 173.76 L 365.28 202.56 L 365.52 202.56 L 365.52 173.76 L 365.76 173.76 L 365.76 202.56 L 366 202.56 L 366 173.76 L 366.24 173.76 L 366.24 207.36 L 366.48 202.56 L 366.48 173.76 L 366.72 171.36 L 366.72 202.56 L 366.96 202.56 L 366.96 173.76 L 367.2 173.76 L 367.2 202.56 L 367.44 202.56 L 367.44 171.36 L 367.68 164.16 L 367.68 202.56 L 367.92 202.56 L 367.92 168.96 L 368.16 168.96 L 368.16 204.96 L 368.4 202.56 L 368.4 171.36 L 368.64 171.36 L 368.64 202.56 L 368.88 202.56 L 368.88 171.36 L 369.12 171.36 L 369.12 209.76 L 369.36 204.96 L 369.36 168.96 L 369.6 171.36 L 369.6 202.56 L 369.84 204.96 L 369.84 173.76 L 370.08 173.76 L 370.08 204.96 L 370.32 204.96 L 370.32 171.36 L 370.56 173.76 L 370.56 202.56 L 370.8 207.36 L 370.8 173.76 L 371.04 173.76 L 371.04 202.56 L 371.28 204.96 L 371.28 173.76 L 371.52 173.76 L 371.52 202.56 L 371.76 204.96 L 371.76 173.76 L 372 173.76 L 372 202.56 L 372.24 204.96 L 372.24 173.76 L 372.48 154.56 L 372.48 233.76 L 372.72 284.16 L 372.72 130.56 L 372.96 130.56 L 372.96 339.36 L 373.2 255.36 L 373.2 130.56 L 373.44 111.36 L 373.44 255.36 L 373.68 233.76 L 373.68 118.56 L 373.92 118.56 L 373.92 233.76 L 374.16 233.76 L 374.16 118.56 L 374.4 154.56 L 374.4 233.76 L 374.64 202.56 L 374.64 154.56 L 374.88 154.56 L 374.88 202.56 L 375.12 204.96 L 375.12 154.56 L 375.36 154.56 L 375.36 204.96 L 375.6 204.96 L 375.6 164.16 L 375.84 164.16 L 375.84 202.56 L 376.08 202.56 L 376.08 164.16 L 376.32 164.16 L 376.32 204.96 L 376.56 204.96 L 376.56 171.36 L 376.8 171.36 L 376.8 202.56 L 377.04 204.96 L 377.04 166.56 L 377.28 168.96 L 377.28 204.96 L 377.52 204.96 L 377.52 171.36 L 377.76 171.36 L 377.76 204.96 L 378 202.56 L 378 171.36 L 378.24 171.36 L 378.24 204.96 L 378.48 202.56 L 378.48 171.36 L 378.72 171.36 L 378.72 202.56 L 378.96 207.36 L 378.96 168.96 L 379.2 171.36 L 379.2 204.96 L 379.44 204.96 L 379.44 171.36 L 379.68 171.36 L 379.68 202.56 L 379.92 202.56 L 379.92 171.36 L 380.16 171.36 L 380.16 204.96 L 380.4 204.96 L 380.4 168.96 L 380.64 171.36 L 380.64 202.56 L 380.88 204.96 L 380.88 171.36 L 381.12 171.36 L 381.12 252.96 L 381.36 252.96 L 381.36 125.76 L 381.6 125.76 L 381.6 233.76 L 381.84 233.76 L 381.84 125.76 L 382.08 116.16 L 382.08 233.76 L 382.32 233.76 L 382.32 116.16 L 382.56 152.16 L 382.56 204.96 L 382.8 204.96 L 382.8 152.16 L 383.04 152.16 L 383.04 202.56 L 383.28 204.96 L 383.28 156.96 L 383.52 156.96 L 383.52 202.56 L 383.76 202.56 L 383.76 156.96 L 384 156.96 L 384 204.96 L 384.24 207.36 L 384.24 156.96 L 384.48 164.16 L 384.48 202.56 L 384.72 204.96 L 384.72 164.16 L 384.96 164.16 L 384.96 204.96 L 385.2 204.96 L 385.2 164.16 L 385.44 171.36 L 385.44 202.56 L 385.68 202.56 L 385.68 168.96 L 385.92 171.36 L 385.92 202.56 L 386.16 204.96 L 386.16 171.36 L 386.4 171.36 L 386.4 202.56 L 386.64 204.96 L 386.64 168.96 L 386.88 168.96 L 386.88 202.56 L 387.12 204.96 L 387.12 168.96 L 387.36 168.96 L 387.36 204.96 L 387.6 202.56 L 387.6 168.96 L 387.84 171.36 L 387.84 207.36 L 388.08 204.96 L 388.08 166.56 L 388.32 171.36 L 388.32 204.96 L 388.56 202.56 L 388.56 171.36 L 388.8 164.16 L 388.8 202.56 L 389.04 204.96 L 389.04 171.36 L 389.28 171.36 L 389.28 202.56 L 389.52 204.96 L 389.52 168.96 L 389.76 168.96 L 389.76 204.96 L 390 207.36 L 390 171.36 L 390.24 171.36 L 390.24 202.56 L 390.48 202.56 L 390.48 171.36 L 390.72 171.36 L 390.72 202.56 L 390.96 204.96 L 390.96 168.96 L 391.2 171.36 L 391.2 202.56 L 391.44 202.56 L 391.44 168.96 L 391.68 168.96 L 391.68 202.56 L 391.92 202.56 L 391.92 168.96 L 392.16 168.96 L 392.16 202.56 L 392.4 202.56 L 392.4 168.96 L 392.64 171.36 L 392.64 202.56 L 392.88 202.56 L 392.88 168.96 L 393.12 171.36 L 393.12 202.56 L 393.36 202.56 L 393.36 168.96 L 393.6 168.96 L 393.6 200.16 L 393.84 200.16 L 393.84 168.96 L 394.08 171.36 L 394.08 200.16 L 394.32 200.16 L 394.32 171.36 L 394.56 166.56 L 394.56 202.56 L 394.8 200.16 L 394.8 168.96 L 395.04 171.36 L 395.04 200.16 L 395.28 200.16 L 395.28 171.36 L 395.52 168.96 L 395.52 204.96 L 395.76 200.16 L 395.76 168.96 L 396 171.36 L 396 200.16 L 396.24 200.16 L 396.24 171.36 L 396.48 171.36 L 396.48 200.16 L 396.72 200.16 L 396.72 171.36 L 396.96 171.36 L 396.96 197.76 L 397.2 197.76 L 397.2 171.36 L 397.44 168.96 L 397.44 197.76 L 397.68 197.76 L 397.68 168.96 L 397.92 168.96 L 397.92 200.16 L 398.16 197.76 L 398.16 166.56 L 398.4 168.96 L 398.4 200.16 L 398.64 197.76 L 398.64 168.96 L 398.88 168.96 L 398.88 197.76 L 399.12 197.76 L 399.12 168.96 L 399.36 168.96 L 399.36 200.16 L 399.6 200.16 L 399.6 166.56 L 399.84 166.56 L 399.84 197.76 L 400.08 197.76 L 400.08 166.56 L 400.32 166.56 L 400.32 197.76 L 400.56 197.76 L 400.56 166.56 L 400.8 166.56 L 400.8 200.16 L 401.04 197.76 L 401.04 166.56 L 401.28 166.56 L 401.28 195.36 L 401.52 197.76 L 401.52 166.56 L 401.76 166.56 L 401.76 197.76 L 402 197.76 L 402 166.56 L 402.24 166.56 L 402.24 197.76 L 402.48 195.36 L 402.48 161.76 L 402.72 161.76 L 402.72 197.76 L 402.96 197.76 L 402.96 164.16 L 403.2 164.16 L 403.2 195.36 L 403.44 195.36 L 403.44 164.16 L 403.68 164.16 L 403.68 195.36 L 403.92 195.36 L 403.92 164.16 L 404.16 164.16 L 404.16 195.36 L 404.4 195.36 L 404.4 164.16 L 404.64 164.16 L 404.64 195.36 L 404.88 195.36 L 404.88 164.16 L 405.12 164.16 L 405.12 195.36 L 405.36 195.36 L 405.36 164.16 L 405.6 164.16 L 405.6 195.36 L 405.84 195.36 L 405.84 164.16 L 406.08 164.16 L 406.08 195.36 L 406.32 195.36 L 406.32 164.16 L 406.56 164.16 L 406.56 195.36 L 406.8 195.36 L 406.8 164.16 L 407.04 164.16 L 407.04 197.76 L 407.28 195.36 L 407.28 164.16 L 407.52 164.16 L 407.52 197.76 L 407.76 195.36 L 407.76 164.16 L 408 161.76 L 408 195.36 L 408.24 195.36 L 408.24 164.16 L 408.48 164.16 L 408.48 195.36 L 408.72 197.76 L 408.72 164.16 L 408.96 164.16 L 408.96 195.36 L 409.2 195.36 L 409.2 159.36 L 409.44 164.16 L 409.44 197.76 L 409.68 195.36 L 409.68 164.16 L 409.92 164.16 L 409.92 195.36 L 410.16 197.76 L 410.16 164.16 L 410.4 164.16 L 410.4 195.36 L 410.64 195.36 L 410.64 164.16 L 410.88 164.16 L 410.88 197.76 L 411.12 197.76 L 411.12 164.16 L 411.36 164.16 L 411.36 195.36 L 411.6 197.76 L 411.6 164.16 L 411.84 164.16 L 411.84 195.36 L 412.08 195.36 L 412.08 164.16 L 412.32 164.16 L 412.32 197.76 L 412.56 195.36 L 412.56 161.76 L 412.8 164.16 L 412.8 195.36 L 413.04 195.36 L 413.04 159.36 L 413.28 164.16 L 413.28 195.36 L 413.52 195.36 L 413.52 164.16 L 413.76 161.76 L 413.76 195.36 L 414 195.36 L 414 164.16 L 414.24 164.16 L 414.24 195.36 L 414.48 195.36 L 414.48 164.16 L 414.72 164.16 L 414.72 197.76 L 414.96 195.36 L 414.96 164.16 L 415.2 164.16 L 415.2 195.36 L 415.44 195.36 L 415.44 164.16 L 415.68 164.16 L 415.68 195.36 L 415.92 195.36 L 415.92 164.16 L 416.16 164.16 L 416.16 195.36 L 416.4 195.36 L 416.4 164.16 L 416.64 164.16 L 416.64 195.36 L 416.88 195.36 L 416.88 164.16 L 417.12 164.16 L 417.12 195.36 L 417.36 195.36 L 417.36 164.16 L 417.6 164.16 L 417.6 195.36 L 417.84 195.36 L 417.84 164.16 L 418.08 164.16 L 418.08 195.36 L 418.32 200.16 L 418.32 164.16 L 418.56 164.16 L 418.56 195.36 L 418.8 195.36 L 418.8 164.16 L 419.04 164.16 L 419.04 195.36 L 419.28 195.36 L 419.28 164.16 L 419.52 164.16 L 419.52 195.36 L 419.76 195.36 L 419.76 164.16 L 420 164.16 L 420 197.76 L 420.24 195.36 L 420.24 164.16 L 420.48 164.16 L 420.48 195.36 L 420.72 195.36 L 420.72 164.16 L 420.96 164.16 L 420.96 195.36 L 421.2 195.36 L 421.2 164.16 L 421.44 161.76 L 421.44 195.36 L 421.68 197.76 L 421.68 164.16 L 421.92 161.76 L 421.92 197.76 L 422.16 197.76 L 422.16 164.16 L 422.4 161.76 L 422.4 195.36 L 422.64 197.76 L 422.64 164.16 L 422.88 164.16 L 422.88 195.36 L 423.12 195.36 L 423.12 164.16 L 423.36 164.16 L 423.36 195.36 L 423.6 195.36 L 423.6 164.16 L 423.84 164.16 L 423.84 197.76 L 424.08 195.36 L 424.08 164.16 L 424.32 164.16 L 424.32 195.36 L 424.56 195.36 L 424.56 164.16 L 424.8 164.16 L 424.8 195.36 L 425.04 195.36 L 425.04 164.16 L 425.28 161.76 L 425.28 195.36 L 425.52 195.36 L 425.52 164.16 L 425.76 164.16 L 425.76 197.76 L 426 197.76 L 426 164.16 L 426.24 164.16 L 426.24 195.36 L 426.48 200.16 L 426.48 164.16 L 426.72 164.16 L 426.72 195.36 L 426.96 195.36 L 426.96 161.76 L 427.2 164.16 L 427.2 195.36 L 427.44 195.36 L 427.44 164.16 L 427.68 164.16 L 427.68 197.76 L 427.92 195.36 L 427.92 164.16 L 428.16 164.16 L 428.16 195.36 L 428.4 195.36 L 428.4 164.16 L 428.64 164.16 L 428.64 195.36 L 428.88 195.36 L 428.88 164.16 L 429.12 164.16 L 429.12 195.36 L 429.36 195.36 L 429.36 164.16 L 429.6 164.16 L 429.6 195.36 L 429.84 195.36 L 429.84 164.16 L 430.08 164.16 L 430.08 195.36 L 430.32 195.36 L 430.32 164.16 L 430.56 164.16 L 430.56 195.36 L 430.8 195.36 L 430.8 164.16 L 431.04 164.16 L 431.04 195.36 L 431.28 195.36 L 431.28 164.16 L 431.52 164.16 L 431.52 195.36 L 431.76 195.36 L 431.76 164.16 L 432 164.16 L 432 195.36 L 432.24 195.36 L 432.24 164.16 L 432.48 164.16 L 432.48 195.36 L 432.72 195.36 L 432.72 164.16 L 432.96 164.16 L 432.96 195.36 L 433.2 195.36 L 433.2 164.16 L 433.44 164.16 L 433.44 200.16 L 433.68 195.36 L 433.68 164.16 L 433.92 164.16 L 433.92 195.36 L 434.16 195.36 L 434.16 164.16 L 434.4 164.16 L 434.4 195.36 L 434.64 195.36 L 434.64 164.16 L 434.88 164.16 L 434.88 195.36 L 435.12 195.36 L 435.12 164.16 L 435.36 164.16 L 435.36 195.36 L 435.6 197.76 L 435.6 164.16 L 435.84 164.16 L 435.84 195.36 L 436.08 197.76 L 436.08 164.16 L 436.32 164.16 L 436.32 197.76 L 436.56 195.36 L 436.56 164.16 L 436.8 164.16 L 436.8 195.36 L 437.04 195.36 L 437.04 164.16 L 437.28 164.16 L 437.28 195.36 L 437.52 195.36 L 437.52 164.16 L 437.76 164.16 L 437.76 195.36 L 438 195.36 L 438 164.16 L 438.24 164.16 L 438.24 197.76 L 438.48 195.36 L 438.48 164.16 L 438.72 164.16 L 438.72 197.76 L 438.96 197.76 L 438.96 161.76 L 439.2 164.16 L 439.2 195.36 L 439.44 197.76 L 439.44 164.16 L 439.68 164.16 L 439.68 195.36 L 439.92 195.36 L 439.92 164.16 L 440.16 164.16 L 440.16 200.16 L 440.4 195.36 L 440.4 164.16 L 440.64 164.16 L 440.64 195.36 L 440.88 200.16 L 440.88 164.16 L 441.12 164.16 L 441.12 195.36 L 441.36 195.36 L 441.36 164.16 L 441.6 164.16 L 441.6 195.36 L 441.84 195.36 L 441.84 164.16 L 442.08 161.76 L 442.08 195.36 L 442.32 197.76 L 442.32 164.16 L 442.56 164.16 L 442.56 195.36 L 442.8 200.16 L 442.8 164.16 L 443.04 164.16 L 443.04 195.36 L 443.28 197.76 L 443.28 164.16 L 443.52 164.16 L 443.52 195.36 L 443.76 195.36 L 443.76 164.16 L 444 164.16 L 444 195.36 L 444.24 197.76 L 444.24 164.16 L 444.48 164.16 L 444.48 197.76 L 444.72 195.36 L 444.72 164.16 L 444.96 164.16 L 444.96 195.36 L 445.2 195.36 L 445.2 164.16 L 445.44 164.16 L 445.44 195.36 L 445.68 195.36 L 445.68 164.16 L 445.92 161.76 L 445.92 195.36 L 446.16 197.76 L 446.16 164.16 L 446.4 164.16 L 446.4 195.36 L 446.64 195.36 L 446.64 164.16 L 446.88 164.16 L 446.88 195.36 L 447.12 195.36 L 447.12 164.16 L 447.36 164.16 L 447.36 195.36 L 447.6 195.36 L 447.6 161.76 L 447.84 164.16 L 447.84 195.36 L 448.08 197.76 L 448.08 161.76 L 448.32 164.16 L 448.32 195.36 L 448.56 195.36 L 448.56 164.16 L 448.8 164.16 L 448.8 195.36 L 449.04 195.36 L 449.04 159.36 L 449.28 164.16 L 449.28 195.36 L 449.52 197.76 L 449.52 161.76 L 449.76 164.16 L 449.76 195.36 L 450 195.36 L 450 164.16 L 450.24 161.76 L 450.24 195.36 L 450.48 197.76 L 450.48 164.16 L 450.72 164.16 L 450.72 195.36 L 450.96 195.36 L 450.96 164.16 L 451.2 164.16 L 451.2 195.36 L 451.44 195.36 L 451.44 164.16 L 451.68 164.16 L 451.68 195.36 L 451.92 195.36 L 451.92 164.16 L 452.16 164.16 L 452.16 195.36 L 452.4 195.36 L 452.4 164.16 L 452.64 164.16 L 452.64 195.36 L 452.88 195.36 L 452.88 164.16 L 453.12 161.76 L 453.12 195.36 L 453.36 195.36 L 453.36 161.76 L 453.6 164.16 L 453.6 195.36 L 453.84 195.36 L 453.84 161.76 L 454.08 161.76 L 454.08 195.36 L 454.32 195.36 L 454.32 164.16 L 454.56 164.16 L 454.56 195.36 L 454.8 195.36 L 454.8 161.76 L 455.04 164.16 L 455.04 197.76 L 455.28 195.36 L 455.28 164.16 L 455.52 164.16 L 455.52 195.36 L 455.76 195.36 L 455.76 164.16 L 456 164.16 L 456 195.36 L 456.24 197.76 L 456.24 164.16 L 456.48 164.16 L 456.48 195.36 L 456.72 195.36 L 456.72 164.16 L 456.96 164.16 L 456.96 195.36 L 457.2 195.36 L 457.2 164.16 L 457.44 164.16 L 457.44 195.36 L 457.68 195.36 L 457.68 161.76 L 457.92 164.16 L 457.92 195.36 L 458.16 195.36 L 458.16 164.16 L 458.4 164.16 L 458.4 195.36 L 458.64 195.36 L 458.64 164.16 L 458.88 164.16 L 458.88 197.76 L 459.12 195.36 L 459.12 164.16 L 459.36 164.16 L 459.36 195.36 L 459.6 195.36 L 459.6 161.76 L 459.84 164.16 L 459.84 195.36 L 460.08 195.36 L 460.08 164.16 L 460.32 164.16 L 460.32 197.76 L 460.56 195.36 L 460.56 164.16 L 460.8 164.16 L 460.8 195.36 L 461.04 195.36 L 461.04 164.16 L 461.28 164.16 L 461.28 195.36 L 461.52 195.36 L 461.52 164.16 L 461.76 164.16 L 461.76 195.36 L 462 195.36 L 462 164.16 L 462.24 164.16 L 462.24 195.36 L 462.48 195.36 L 462.48 164.16 L 462.72 161.76 L 462.72 195.36 L 462.96 195.36 L 462.96 164.16 L 463.2 164.16 L 463.2 195.36 L 463.44 195.36 L 463.44 164.16 L 463.68 164.16 L 463.68 195.36 L 463.92 195.36 L 463.92 164.16 L 464.16 164.16 L 464.16 195.36 L 464.4 195.36 L 464.4 164.16 L 464.64 164.16 L 464.64 195.36 L 464.88 195.36 L 464.88 164.16 L 465.12 164.16 L 465.12 195.36 L 465.36 195.36 L 465.36 164.16 L 465.6 164.16 L 465.6 195.36 L 465.84 195.36 L 465.84 164.16 L 466.08 164.16 L 466.08 195.36 L 466.32 195.36 L 466.32 164.16 L 466.56 164.16 L 466.56 195.36 L 466.8 197.76 L 466.8 164.16 L 467.04 164.16 L 467.04 195.36 L 467.28 195.36 L 467.28 159.36 L 467.52 164.16 L 467.52 195.36 L 467.76 197.76 L 467.76 164.16 L 468 164.16 L 468 195.36 L 468.24 195.36 L 468.24 164.16 L 468.48 164.16 L 468.48 195.36 L 468.72 195.36 L 468.72 164.16 L 468.96 164.16 L 468.96 195.36 L 469.2 195.36 L 469.2 164.16 L 469.44 164.16 L 469.44 195.36 L 469.68 197.76 L 469.68 161.76 L 469.92 164.16 L 469.92 195.36 L 470.16 195.36 L 470.16 164.16 L 470.4 164.16 L 470.4 195.36 L 470.64 195.36 L 470.64 164.16 L 470.88 164.16 L 470.88 195.36 L 471.12 195.36 L 471.12 164.16 L 471.36 164.16 L 471.36 197.76 L 471.6 195.36 L 471.6 164.16 L 471.84 164.16 L 471.84 195.36 L 472.08 197.76 L 472.08 164.16 L 472.32 164.16 L 472.32 195.36 L 472.56 195.36 L 472.56 164.16 L 472.8 164.16 L 472.8 195.36 L 473.04 195.36 L 473.04 164.16 L 473.28 164.16 L 473.28 195.36 L 473.52 195.36 L 473.52 164.16 L 473.76 164.16 L 473.76 195.36 L 474 195.36 L 474 164.16 L 474.24 164.16 L 474.24 195.36 L 474.48 195.36 L 474.48 164.16 L 474.72 164.16 L 474.72 195.36 L 474.96 195.36 L 474.96 161.76 L 475.2 164.16 L 475.2 197.76 L 475.44 195.36 L 475.44 161.76 L 475.68 164.16 L 475.68 195.36 L 475.92 195.36 L 475.92 164.16 L 476.16 164.16 L 476.16 195.36 L 476.4 197.76 L 476.4 164.16 L 476.64 164.16 L 476.64 195.36 L 476.88 195.36 L 476.88 164.16 L 477.12 164.16 L 477.12 195.36 L 477.36 195.36 L 477.36 164.16 L 477.6 164.16 L 477.6 195.36 L 477.84 195.36 L 477.84 164.16 L 478.08 164.16 L 478.08 195.36 L 478.32 197.76 L 478.32 164.16 L 478.56 164.16 L 478.56 195.36 L 478.8 195.36 L 478.8 164.16 L 479.04 164.16 L 479.04 197.76 L 479.28 195.36 L 479.28 164.16 L 479.52 164.16 L 479.52 195.36 L 479.76 195.36 L 479.76 161.76 L 480 161.76 L 480 195.36 L 480.24 195.36 L 480.24 164.16 L 480.48 164.16 L 480.48 195.36 L 480.72 195.36 L 480.72 164.16 L 480.96 164.16 L 480.96 195.36 L 481.2 195.36 L 481.2 164.16 L 481.44 164.16 L 481.44 195.36 L 481.68 195.36 L 481.68 164.16 L 481.92 164.16 L 481.92 195.36 L 482.16 195.36 L 482.16 164.16 L 482.4 164.16 L 482.4 195.36 L 482.64 195.36 L 482.64 164.16 L 482.88 161.76 L 482.88 195.36 L 483.12 195.36 L 483.12 164.16 L 483.36 164.16 L 483.36 195.36 L 483.6 195.36 L 483.6 164.16 L 483.84 164.16 L 483.84 195.36 L 484.08 195.36 L 484.08 164.16 L 484.32 164.16 L 484.32 195.36 L 484.56 195.36 L 484.56 164.16 L 484.8 164.16 L 484.8 195.36 L 485.04 195.36 L 485.04 164.16 L 485.28 164.16 L 485.28 195.36 L 485.52 195.36 L 485.52 161.76 L 485.76 164.16 L 485.76 195.36 L 486 195.36 L 486 164.16 L 486.24 161.76 L 486.24 200.16 L 486.48 197.76 L 486.48 164.16 L 486.72 164.16 L 486.72 195.36 L 486.96 197.76 L 486.96 164.16 L 487.2 164.16 L 487.2 197.76 L 487.44 195.36 L 487.44 164.16 L 487.68 164.16 L 487.68 195.36 L 487.92 195.36 L 487.92 164.16 L 488.16 164.16 L 488.16 195.36 L 488.4 195.36 L 488.4 164.16 L 488.64 164.16 L 488.64 195.36 L 488.88 195.36 L 488.88 164.16 L 489.12 161.76 L 489.12 195.36 L 489.36 195.36 L 489.36 161.76 L 489.6 164.16 L 489.6 197.76 L 489.84 195.36 L 489.84 164.16 L 490.08 164.16 L 490.08 195.36 L 490.32 195.36 L 490.32 164.16 L 490.56 161.76 L 490.56 195.36 L 490.8 195.36 L 490.8 164.16 L 491.04 164.16 L 491.04 197.76 L 491.28 195.36 L 491.28 164.16 L 491.52 164.16 L 491.52 195.36 L 491.76 195.36 L 491.76 161.76 L 492 164.16 L 492 195.36 L 492.24 195.36 L 492.24 164.16 L 492.48 164.16 L 492.48 197.76 L 492.72 195.36 L 492.72 164.16 L 492.96 164.16 L 492.96 195.36 L 493.2 195.36 L 493.2 164.16 L 493.44 164.16 L 493.44 197.76 L 493.68 195.36 L 493.68 164.16 L 493.92 161.76 L 493.92 195.36 L 494.16 195.36 L 494.16 164.16 L 494.4 164.16 L 494.4 195.36 L 494.64 195.36 L 494.64 164.16 L 494.88 164.16 L 494.88 195.36 L 495.12 195.36 L 495.12 164.16 L 495.36 164.16 L 495.36 197.76 L 495.6 195.36 L 495.6 164.16 L 495.84 164.16 L 495.84 195.36 L 496.08 195.36 L 496.08 164.16 L 496.32 164.16 L 496.32 195.36 L 496.56 195.36 L 496.56 164.16 L 496.8 164.16 L 496.8 195.36 L 497.04 197.76 L 497.04 164.16 L 497.28 164.16 L 497.28 195.36 L 497.52 195.36 L 497.52 164.16 L 497.76 164.16 L 497.76 195.36 L 498 195.36 L 498 161.76 L 498.24 164.16 L 498.24 195.36 L 498.48 195.36 L 498.48 164.16 L 498.72 164.16 L 498.72 195.36 L 498.96 195.36 L 498.96 161.76 L 499.2 164.16 L 499.2 195.36 L 499.44 195.36 L 499.44 164.16 L 499.68 164.16 L 499.68 195.36 L 499.92 195.36 L 499.92 161.76 L 500.16 164.16 L 500.16 195.36 L 500.4 195.36 L 500.4 159.36 L 500.64 164.16 L 500.64 197.76 L 500.88 195.36 L 500.88 164.16 L 501.12 164.16 L 501.12 195.36 L 501.36 195.36 L 501.36 164.16 L 501.6 164.16 L 501.6 195.36 L 501.84 195.36 L 501.84 164.16 L 502.08 164.16 L 502.08 195.36 L 502.32 195.36 L 502.32 164.16 L 502.56 164.16 L 502.56 195.36 L 502.8 195.36 L 502.8 164.16 L 503.04 164.16 L 503.04 195.36 L 503.28 195.36 L 503.28 164.16 L 503.52 164.16 L 503.52 195.36 L 503.76 195.36 L 503.76 164.16 L 504 164.16 L 504 195.36 L 504.24 195.36 L 504.24 164.16 L 504.48 164.16 L 504.48 195.36 L 504.72 195.36 L 504.72 164.16 L 504.96 164.16 L 504.96 195.36 L 505.2 195.36 L 505.2 164.16 L 505.44 164.16 L 505.44 195.36 L 505.68 195.36 L 505.68 164.16 L 505.92 164.16 L 505.92 195.36 L 506.16 195.36 L 506.16 164.16 L 506.4 164.16 L 506.4 195.36 L 506.64 195.36 L 506.64 164.16 L 506.88 161.76 L 506.88 195.36 L 507.12 195.36 L 507.12 164.16 L 507.36 164.16 L 507.36 195.36 L 507.6 195.36 L 507.6 164.16 L 507.84 164.16 L 507.84 195.36 L 508.08 195.36 L 508.08 164.16 L 508.32 164.16 L 508.32 195.36 L 508.56 197.76 L 508.56 164.16 L 508.8 164.16 L 508.8 195.36 L 509.04 195.36 L 509.04 164.16 L 509.28 164.16 L 509.28 195.36 L 509.52 195.36 L 509.52 161.76 L 509.76 164.16 L 509.76 195.36 L 510 195.36 L 510 164.16 L 510.24 164.16 L 510.24 195.36 L 510.48 195.36 L 510.48 164.16 L 510.72 164.16 L 510.72 195.36 L 510.96 195.36 L 510.96 164.16 L 511.2 164.16 L 511.2 195.36 L 511.44 195.36 L 511.44 164.16 L 511.68 164.16 L 511.68 197.76 L 511.92 195.36 L 511.92 164.16 L 512.16 164.16 L 512.16 195.36 L 512.4 195.36 L 512.4 164.16 L 512.64 164.16 L 512.64 195.36 L 512.88 195.36 L 512.88 164.16 L 513.12 164.16 L 513.12 195.36 L 513.36 195.36 L 513.36 164.16 L 513.6 164.16 L 513.6 195.36 L 513.84 195.36 L 513.84 164.16 L 514.08 164.16 L 514.08 195.36 L 514.32 195.36 L 514.32 164.16 L 514.56 164.16 L 514.56 197.76 L 514.8 195.36 L 514.8 164.16 L 515.04 161.76 L 515.04 195.36 L 515.28 195.36 L 515.28 164.16 L 515.52 161.76 L 515.52 195.36 L 515.76 195.36 L 515.76 164.16 L 516 164.16 L 516 195.36 L 516.24 195.36 L 516.24 164.16 L 516.48 164.16 L 516.48 195.36 L 516.72 195.36 L 516.72 164.16 L 516.96 164.16 L 516.96 195.36 L 517.2 195.36 L 517.2 164.16 L 517.44 164.16 L 517.44 197.76 L 517.68 195.36 L 517.68 164.16 L 517.92 164.16 L 517.92 195.36 L 518.16 195.36 L 518.16 161.76 L 518.4 164.16 L 518.4 197.76 L 518.64 195.36 L 518.64 164.16 L 518.88 164.16 L 518.88 195.36 L 519.12 195.36 L 519.12 164.16 L 519.36 164.16 L 519.36 195.36 L 519.6 195.36 L 519.6 164.16 L 519.84 164.16 L 519.84 197.76 L 520.08 197.76 L 520.08 164.16 L 520.32 164.16 L 520.32 195.36 L 520.56 195.36 L 520.56 164.16 L 520.8 164.16 L 520.8 195.36 L 521.04 197.76 L 521.04 164.16 L 521.28 164.16 L 521.28 195.36 L 521.52 195.36 L 521.52 164.16 L 521.76 164.16 L 521.76 197.76 L 522 195.36 L 522 164.16 L 522.24 164.16 L 522.24 195.36 L 522.48 195.36 L 522.48 161.76 L 522.72 164.16 L 522.72 195.36 L 522.96 195.36 L 522.96 164.16 L 523.2 164.16 L 523.2 195.36 L 523.44 195.36 L 523.44 164.16 L 523.68 164.16 L 523.68 195.36 L 523.92 197.76 L 523.92 161.76 L 524.16 164.16 L 524.16 195.36 L 524.4 195.36 L 524.4 164.16 L 524.64 164.16 L 524.64 195.36 L 524.88 197.76 L 524.88 164.16 L 525.12 164.16 L 525.12 195.36 L 525.36 195.36 L 525.36 164.16 L 525.6 164.16 L 525.6 195.36 L 525.84 195.36 L 525.84 164.16 L 526.08 164.16 L 526.08 197.76 L 526.32 195.36 L 526.32 164.16 L 526.56 164.16 L 526.56 195.36 L 526.8 195.36 L 526.8 164.16 L 527.04 164.16 L 527.04 195.36 L 527.28 195.36 L 527.28 164.16 L 527.52 164.16 L 527.52 195.36 L 527.76 195.36 L 527.76 161.76 L 528 164.16 L 528 197.76 L 528.24 195.36 L 528.24 164.16 L 528.48 164.16 L 528.48 195.36 L 528.72 195.36 L 528.72 164.16 L 528.96 164.16 L 528.96 195.36 L 529.2 195.36 L 529.2 164.16 L 529.44 164.16 L 529.44 195.36 L 529.68 197.76 L 529.68 164.16 L 529.92 164.16 L 529.92 195.36 L 530.16 195.36 L 530.16 164.16 L 530.4 164.16 L 530.4 195.36 L 530.64 195.36 L 530.64 164.16 L 530.88 164.16 L 530.88 195.36 L 531.12 195.36 L 531.12 164.16 L 531.36 164.16 L 531.36 195.36 L 531.6 195.36 L 531.6 164.16 L 531.84 164.16 L 531.84 195.36 L 532.08 195.36 L 532.08 164.16 L 532.32 164.16 L 532.32 195.36 L 532.56 197.76 L 532.56 164.16 L 532.8 164.16 L 532.8 195.36 L 533.04 195.36 L 533.04 161.76 L 533.28 164.16 L 533.28 195.36 L 533.52 195.36 L 533.52 164.16 L 533.76 164.16 L 533.76 195.36 L 534 195.36 L 534 164.16 L 534.24 164.16 L 534.24 195.36 L 534.48 197.76 L 534.48 164.16 L 534.72 164.16 L 534.72 195.36 L 534.96 195.36 L 534.96 161.76 L 535.2 164.16 L 535.2 195.36 L 535.44 195.36 L 535.44 164.16 L 535.68 164.16 L 535.68 195.36 L 535.92 195.36 L 535.92 164.16 L 536.16 164.16 L 536.16 195.36" clip-path="url(#p181a11c517)" style="fill: none; stroke: #ffa500; stroke-opacity: 0.9; stroke-linecap: square"/>
</g>
<g id="line2d_14">
<path d="M 99.36 185.76 L 226.08 185.76 L 226.08 183.36 L 279.94 183.36 L 279.94 190.56 L 297.89 190.56 L 297.89 188.16 L 315.84 188.16 L 315.84 185.76 L 351.74 185.76 L 351.74 183.36 L 369.7 183.36 L 369.7 185.76 L 387.65 185.76 L 387.65 183.36 L 405.6 183.36 L 405.6 180.96 L 441.5 180.96 L 441.5 178.56 L 477.41 178.56 L 477.41 180.96 L 513.31 180.96 L 513.31 178.56 L 536.06 178.56" clip-path="url(#p181a11c517)" style="fill: none; stroke: #000000; stroke-width: 1.5; stroke-linecap: square"/>
</g>
<g id="line2d_15">
<defs>
<path id="maef9e21243" d="M 0 3 C 0.8 3 1.56 2.68 2.12 2.12 C 2.68 1.56 3 0.8 3 0 C 3 -0.8 2.68 -1.56 2.12 -2.12 C 1.56 -2.68 0.8 -3 0 -3 C -0.8 -3 -1.56 -2.68 -2.12 -2.12 C -2.68 -1.56 -3 -0.8 -3 0 C -3 0.8 -2.68 1.56 -2.12 2.12 C -1.56 2.68 -0.8 3 0 3 z" style="stroke: #008000"/>
</defs>
<g clip-path="url(#p181a11c517)">
<use href="#maef9e21243" x="243.36" y="87.36" style="fill: #008000; stroke: #008000"/>
<use href="#maef9e21243" x="256.32" y="118.56" style="fill: #008000; stroke: #008000"/>
<use href="#maef9e21243" x="264" y="68.16" style="fill: #008000; stroke: #008000"/>
<use href="#maef9e21243" x="274.56" y="92.16" style="fill: #008000; stroke: #008000"/>
<use href="#maef9e21243" x="286.08" y="87.36" style="fill: #008000; stroke: #008000"/>
<use href="#maef9e21243" x="293.76" y="108.96" style="fill: #008000; stroke: #008000"/>
<use href="#maef9e21243" x="302.88" y="72.96" style="fill: #008000; stroke: #008000"/>
<use href="#maef9e21243" x="318.72" y="92.16" style="fill: #008000; stroke: #008000"/>
<use href="#maef9e21243" x="328.32" y="60.96" style="fill: #008000; stroke: #008000"/>
<use href="#maef9e21243" x="338.4" y="106.56" style="fill: #008000; stroke: #008000"/>
<use href="#maef9e21243" x="350.112" y="82.56" style="fill: #008000; stroke: #008000"/>
<use href="#maef9e21243" x="351.12" y="123.36" style="fill: #008000; stroke: #008000"/>
</g>
</g>
<g id="line2d_16">
<defs>
<path id="m6c55299713" d="M -0 3 L 3 -3 L -3 -3 z" style="stroke: #0000ff; stroke-linejoin: miter"/>
</defs>
<g clip-path="url(#p181a11c517)">
<use href="#m6c55299713" x="373.44" y="111.36" style="fill: #0000ff; stroke: #0000ff; stroke-linejoin: miter"/>
<use href="#m6c55299713" x="374.4" y="118.56" style="fill: #0000ff; stroke: #0000ff; stroke-linejoin: miter"/>
<use href="#m6c55299713" x="382.08" y="116.16" style="fill: #0000ff; stroke: #0000ff; stroke-linejoin: miter"/>
<use href="#m6c55299713" x="381.12" y="125.76" style="fill: #0000ff; stroke: #0000ff; stroke-linejoin: miter"/>
<use href="#m6c55299713" x="372.576" y="130.56" style="fill: #0000ff; stroke: #0000ff; stroke-linejoin: miter"/>
<use href="#m6c55299713" x="372.96" y="152.16" style="fill: #0000ff; stroke: #0000ff; stroke-linejoin: miter"/>
</g>
</g>
<g id="patch_3">
<path d="M 77.28 353.28 L 77.28 47.04" style="fill: none; stroke: #000000; stroke-width: 0.8; stroke-linejoin: miter; stroke-linecap: square"/>
</g>
<g id="patch_4">
<path d="M 557.76 353.28 L 557.76 47.04" style="fill: none; stroke: #000000; stroke-width: 0.8; stroke-linejoin: miter; stroke-linecap: square"/>
</g>
<g id="patch_5">
<path d="M 77.28 353.28 L 557.76 353.28" style="fill: none; stroke: #000000; stroke-width: 0.8; stroke-linejoin: miter; stroke-linecap: square"/>
</g>
<g id="patch_6">
<path d="M 77.28 47.04 L 557.76 47.04" style="fill: none; stroke: #000000; stroke-width: 0.8; stroke-linejoin: miter; stroke-linecap: square"/>
</g>
<g id="text_15" transform="translate(0.000 0.624)">
<g transform="translate(283.666875 41.04) scale(0.12 -0.12)">
<defs>
<path id="DejaVuSans-53" d="M 3425 4513 L 3425 3897 Q 3066 4069 2747 4153 Q 2428 4238 2131 4238 Q 1616 4238 1336 4038 Q 1056 3838 1056 3469 Q 1056 3159 1242 3001 Q 1428 2844 1947 2747 L 2328 2669 Q 3034 2534 3370 2195 Q 3706 1856 3706 1288 Q 3706 609 3251 259 Q 2797 -91 1919 -91 Q 1588 -91 1214 -16 Q 841 59 441 206 L 441 856 Q 825 641 1194 531 Q 1563 422 1919 422 Q 2459 422 2753 634 Q 3047 847 3047 1241 Q 3047 1584 2836 1778 Q 2625 1972 2144 2069 L 1759 2144 Q 1053 2284 737 2584 Q 422 2884 422 3419 Q 422 4038 858 4394 Q 1294 4750 2059 4750 Q 2388 4750 2728 4690 Q 3069 4631 3425 4513 z" transform="scale(0.015625)"/>
<path id="DejaVuSans-67" d="M 2906 1791 Q 2906 2416 2648 2759 Q 2391 3103 1925 3103 Q 1463 3103 1205 2759 Q 947 2416 947 1791 Q 947 1169 1205 825 Q 1463 481 1925 481 Q 2391 481 2648 825 Q 2906 1169 2906 1791 z M 3481 434 Q 3481 -459 3084 -895 Q 2688 -1331 1869 -1331 Q 1566 -1331 1297 -1286 Q 1028 -1241 775 -1147 L 775 -588 Q 1028 -725 1275 -790 Q 1522 -856 1778 -856 Q 2344 -856 2625 -561 Q 2906 -266 2906 331 L 2906 616 Q 2728 306 2450 153 Q 2172 0 1784 0 Q 1141 0 747 490 Q 353 981 353 1791 Q 353 2603 747 3093 Q 1141 3584 1784 3584 Q 2172 3584 2450 3431 Q 2728 3278 2906 2969 L 2906 3500 L 3481 3500 L 3481 434 z" transform="scale(0.015625)"/>
<path id="DejaVuSans-61" d="M 2194 1759 Q 1497 1759 1228 1600 Q 959 1441 959 1056 Q 959 750 1161 570 Q 1363 391 1709 391 Q 2188 391 2477 730 Q 2766 1069 2766 1631 L 2766 1759 L 2194 1759 z M 3341 1997 L 3341 0 L 2766 0 L 2766 531 Q 2569 213 2275 61 Q 1981 -91 1556 -91 Q 1019 -91 701 211 Q 384 513 384 1019 Q 384 1609 779 1909 Q 1175 2209 1959 2209 L 2766 2209 L 2766 2266 Q 2766 2663 2505 2880 Q 2244 3097 1772 3097 Q 1472 3097 1187 3025 Q 903 2953 641 2809 L 641 3341 Q 956 3463 1253 3523 Q 1550 3584 1831 3584 Q 2591 3584 2966 3190 Q 3341 2797 3341 1997 z" transform="scale(0.015625)"/>
<path id="DejaVuSans-6c" d="M 603 4863 L 1178 4863 L 1178 0 L 603 0 L 603 4863 z" transform="scale(0.015625)"/>
<path id="DejaVuSans-74" d="M 1172 4494 L 1172 3500 L 2356 3500 L 2356 3053 L 1172 3053 L 1172 1153 Q 1172 725 1289 603 Q 1406 481 1766 481 L 2356 481 L 2356 0 L 1766 0 Q 1100 0 847 248 Q 594 497 594 1153 L 594 3053 L 172 3053 L 172 3500 L 594 3500 L 594 4494 L 1172 4494 z" transform="scale(0.015625)"/>
</defs>
<use href="#DejaVuSans-53"/>
<use href="#DejaVuSans-69" transform="translate(63.476562 0)"/>
<use href="#DejaVuSans-67" transform="translate(91.259766 0)"/>
<use href="#DejaVuSans-6e" transform="translate(154.736328 0)"/>
<use href="#DejaVuSans-61" transform="translate(218.115234 0)"/>
<use href="#DejaVuSans-6c" transform="translate(279.394531 0)"/>
<use href="#DejaVuSans-20" transform="translate(307.177734 0)"/>
<use href="#DejaVuSans-64" transform="translate(338.964844 0)"/>
<use href="#DejaVuSans-61" transform="translate(402.441406 0)"/>
<use href="#DejaVuSans-74" transform="translate(463.720703 0)"/>
<use href="#DejaVuSans-61" transform="translate(502.929688 0)"/>
</g>
</g>
<g id="legend_1" transform="translate(0 0.408)">
<g id="patch_7">
<path d="M 412.29 113.75 L 550.76 113.75 Q 552.76 113.75 552.76 111.75 L 552.76 54.04 Q 552.76 52.04 550.76 52.04 L 412.29 52.04 Q 410.29 52.04 410.29 54.04 L 410.29 111.75 Q 410.29 113.75 412.29 113.75 z" style="fill: #ffffff; opacity: 0.8; stroke: #cccccc; stroke-linejoin: miter"/>
</g>
<g id="line2d_17">
<path d="M 414.29 60.14 L 424.29 60.14 L 434.29 60.14" style="fill: none; stroke: #ffa500; stroke-opacity: 0.9; stroke-linecap: square"/>
</g>
<g id="text_16" transform="translate(0 0.216)">
<g transform="translate(442.286563 63.638438) scale(0.1 -0.1)">
<use href="#DejaVuSans-53"/>
<use href="#DejaVuSans-69" transform="translate(63.476562 0)"/>
<use href="#DejaVuSans-67" transform="translate(91.259766 0)"/>
<use href="#DejaVuSans-6e" transform="translate(154.736328 0)"/>
<use href="#DejaVuSans-61" transform="translate(218.115234 0)"/>
<use href="#DejaVuSans-6c" transform="translate(279.394531 0)"/>
<use href="#DejaVuSans-20" transform="translate(307.177734 0)"/>
<use href="#DejaVuSans-32" transform="translate(338.964844 0)"/>
</g>
</g>
<g id="line2d_18">
<path d="M 414.29 74.82 L 424.29 74.82 L 434.29 74.82" style="fill: none; stroke: #000000; stroke-width: 1.5; stroke-linecap: square"/>
</g>
<g id="text_17" transform="translate(0 0.216)">
<g transform="translate(442.286563 78.316563) scale(0.1 -0.1)">
<defs>
<path id="DejaVuSans-42" d="M 1259 2228 L 1259 519 L 2272 519 Q 2781 519 3026 730 Q 3272 941 3272 1375 Q 3272 1813 3026 2020 Q 2781 2228 2272 2228 L 1259 2228 z M 1259 4147 L 1259 2741 L 2194 2741 Q 2656 2741 2882 2914 Q 3109 3088 3109 3444 Q 3109 3797 2882 3972 Q 2656 4147 2194 4147 L 1259 4147 z M 628 4666 L 2241 4666 Q 2963 4666 3353 4366 Q 3744 4066 3744 3513 Q 3744 3084 3544 2831 Q 3344 2578 2956 2516 Q 3422 2416 3680 2098 Q 3938 1781 3938 1306 Q 3938 681 3513 340 Q 3088 0 2303 0 L 628 0 L 628 4666 z" transform="scale(0.015625)"/>
</defs>
<use href="#DejaVuSans-42"/>
<use href="#DejaVuSans-61" transform="translate(68.603516 0)"/>
<use href="#DejaVuSans-73" transform="translate(129.882812 0)"/>
<use href="#DejaVuSans-65" transform="translate(181.982422 0)"/>
<use href="#DejaVuSans-6c" transform="translate(243.505859 0)"/>
<use href="#DejaVuSans-69" transform="translate(271.289062 0)"/>
<use href="#DejaVuSans-6e" transform="translate(299.072266 0)"/>
<use href="#DejaVuSans-65" transform="translate(362.451172 0)"/>
</g>
</g>
<g id="line2d_19">
<g>
<use href="#maef9e21243" x="424.286563" y="89.494687" style="fill: #008000; stroke: #008000"/>
</g>
</g>
<g id="text_18" transform="translate(0 0.216)">
<g transform="translate(442.286563 92.994687) scale(0.1 -0.1)">
<defs>
<path id="DejaVuSans-75" d="M 544 1381 L 544 3500 L 1119 3500 L 1119 1403 Q 1119 906 1312 657 Q 1506 409 1894 409 Q 2359 409 2629 706 Q 2900 1003 2900 1516 L 2900 3500 L 3475 3500 L 3475 0 L 2900 0 L 2900 538 Q 2691 219 2414 64 Q 2138 -91 1772 -91 Q 1169 -91 856 284 Q 544 659 544 1381 z M 1991 3584 L 1991 3584 z" transform="scale(0.015625)"/>
<path id="DejaVuSans-72" d="M 2631 2963 Q 2534 3019 2420 3045 Q 2306 3072 2169 3072 Q 1681 3072 1420 2755 Q 1159 2438 1159 1844 L 1159 0 L 581 0 L 581 3500 L 1159 3500 L 1159 2956 Q 1341 3275 1631 3429 Q 1922 3584 2338 3584 Q 2397 3584 2469 3576 Q 2541 3569 2628 3553 L 2631 2963 z" transform="scale(0.015625)"/>
<path id="DejaVuSans-6b" d="M 581 4863 L 1159 4863 L 1159 1991 L 2875 3500 L 3609 3500 L 1753 1863 L 3688 0 L 2938 0 L 1159 1709 L 1159 0 L 581 0 L 581 4863 z" transform="scale(0.015625)"/>
</defs>
<use href="#DejaVuSans-53"/>
<use href="#DejaVuSans-69" transform="translate(63.476562 0)"/>
<use href="#DejaVuSans-67" transform="translate(91.259766 0)"/>
<use href="#DejaVuSans-6e" transform="translate(154.736328 0)"/>
<use href="#DejaVuSans-61" transform="translate(218.115234 0)"/>
<use href="#DejaVuSans-6c" transform="translate(279.394531 0)"/>
<use href="#DejaVuSans-20" transform="translate(307.177734 0)"/>
<use href="#DejaVuSans-32" transform="translate(338.964844 0)"/>
<use href="#DejaVuSans-20" transform="translate(402.587891 0)"/>
<use href="#DejaVuSans-74" transform="translate(434.375 0)"/>
<use href="#DejaVuSans-75" transform="translate(473.583984 0)"/>
<use href="#DejaVuSans-6d" transform="translate(536.962891 0)"/>
<use href="#DejaVuSans-6f" transform="translate(634.375 0)"/>
<use href="#DejaVuSans-72" transform="translate(695.556641 0)"/>
<use href="#DejaVuSans-20" transform="translate(736.669922 0)"/>
<use href="#DejaVuSans-70" transform="translate(768.457031 0)"/>
<use href="#DejaVuSans-65" transform="translate(831.933594 0)"/>
<use href="#DejaVuSans-61" transform="translate(893.457031 0)"/>
<use href="#DejaVuSans-6b" transform="translate(954.736328 0)"/>
<use href="#DejaVuSans-73" transform="translate(1012.646484 0)"/>
</g>
</g>
<g id="line2d_20">
<g>
<use href="#m6c55299713" x="424.286563" y="104.172813" style="fill: #0000ff; stroke: #0000ff; stroke-linejoin: miter"/>
</g>
</g>
<g id="text_19" transform="translate(0 0.216)">
<g transform="translate(442.286563 107.672813) scale(0.1 -0.1)">
<defs>
<path id="DejaVuSans-57" d="M 213 4666 L 850 4666 L 1831 722 L 2809 4666 L 3519 4666 L 4500 722 L 5478 4666 L 6119 4666 L 4947 0 L 4153 0 L 3169 4050 L 2175 0 L 1381 0 L 213 4666 z" transform="scale(0.015625)"/>
</defs>
<use href="#DejaVuSans-57"/>
<use href="#DejaVuSans-61" transform="translate(92.501953 0)"/>
<use href="#DejaVuSans-74" transform="translate(153.78125 0)"/>
<use href="#DejaVuSans-65" transform="translate(192.990234 0)"/>
<use href="#DejaVuSans-72" transform="translate(254.513672 0)"/>
</g>
</g>
</g>
</g>
</g>
<defs>
<clipPath id="p181a11c517">
<rect x="77.28" y="47.04" width="480.48" height="306.24"/>
</clipPath>
</defs>
</svg></div>
<svg class="abs" style="left:340px;top:998px" width="1304" height="32" viewBox="340 998 1304 32">
<defs><linearGradient id="gv" x1="0" y1="0" x2="0" y2="1"><stop offset="0" stop-color="#b5b5b5"/><stop offset="1" stop-color="#c8c8c8"/></linearGradient>
<linearGradient id="gh" x1="0" y1="0" x2="1" y2="1"><stop offset="0" stop-color="#b8b8b8"/><stop offset="1" stop-color="#8e8e8e"/></linearGradient></defs>
<rect x="346.75" y="1004.85" width="1290.5" height="17.4" fill="url(#gv)" stroke="#999" stroke-width="1.5"/>
<rect x="1255" y="1005.7" width="81" height="15.5" fill="#0078d7"/>
<rect x="1233.4" y="1003.7" width="21.8" height="19.3" rx="4" fill="url(#gh)" stroke="#585858" stroke-width="1.4"/>
<rect x="1335.5" y="1003.7" width="21.8" height="19.3" rx="4" fill="url(#gh)" stroke="#585858" stroke-width="1.4"/>
</svg>
</div></body></html>
